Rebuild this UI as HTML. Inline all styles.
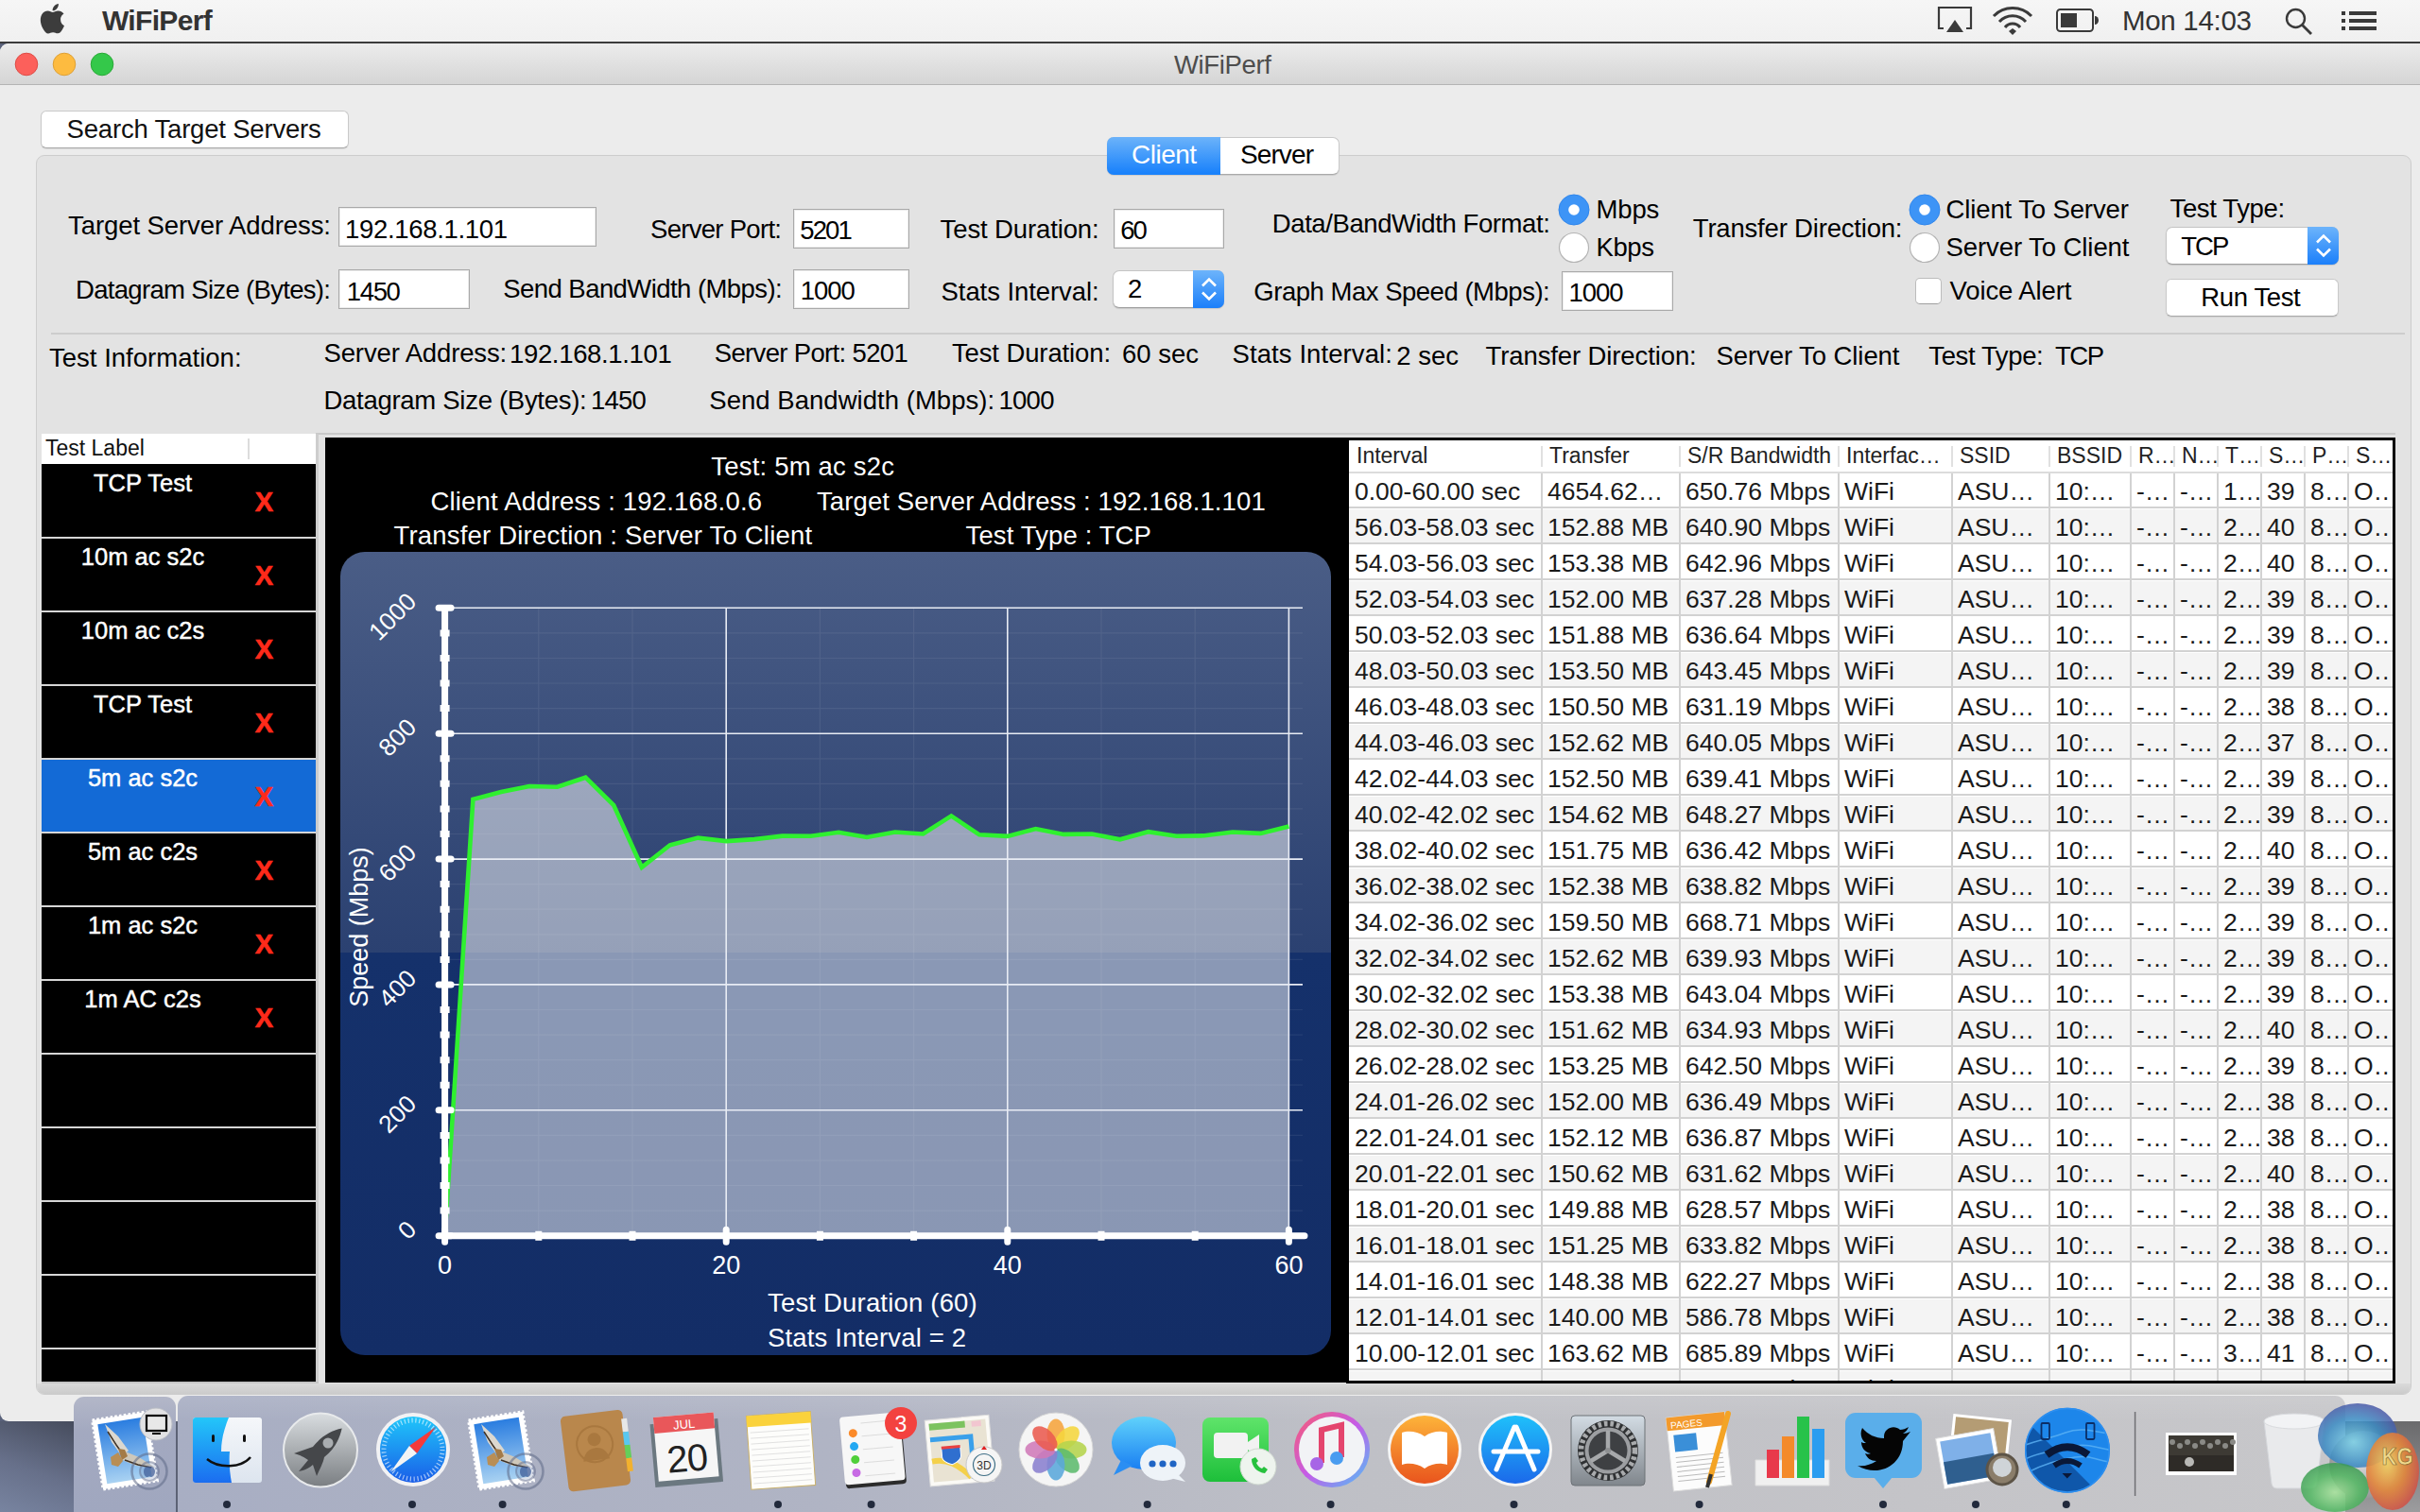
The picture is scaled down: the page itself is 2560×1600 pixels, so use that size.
<!DOCTYPE html><html><head><meta charset="utf-8"><title>WiFiPerf</title><style>
html,body{margin:0;padding:0;}
body{width:2560px;height:1600px;overflow:hidden;position:relative;font-family:"Liberation Sans", sans-serif;
background:linear-gradient(90deg,#59617a 0%,#6a6f80 40%,#7a7a80 100%);}
.t{position:absolute;white-space:pre;}
.r{position:absolute;box-sizing:border-box;}
svg{position:absolute;}

</style></head><body>
<div class="r" style="left:0px;top:0px;width:2560px;height:44px;background:linear-gradient(#f6f6f6,#f0f0f0);"></div>
<div class="r" style="left:0px;top:44px;width:2560px;height:2px;background:#3b3b3b;"></div>
<svg style="left:40px;top:3px" width="32" height="36" viewBox="0 0 34.8 39.2">
<path fill="#3c3c3c" d="M26.2 19.1c0-4.3 3.5-6.3 3.7-6.5-2-2.9-5.1-3.3-6.2-3.4-2.6-.3-5.2 1.6-6.5 1.6-1.4 0-3.4-1.5-5.6-1.5-2.9 0-5.6 1.7-7.1 4.3-3 5.3-.8 13.1 2.2 17.3 1.4 2.1 3.1 4.5 5.3 4.4 2.1-.1 2.9-1.4 5.5-1.4s3.300 1.4 5.500 1.3c2.300 0 3.700-2.100 5.100-4.200 1.600-2.400 2.300-4.700 2.300-4.800-.1 0-4.200-1.600-4.200-7.100zM22 6.500c1.200-1.400 2-3.400 1.800-5.400-1.700.1-3.800 1.100-5 2.600-1.100 1.300-2.100 3.300-1.800 5.300 1.900.1 3.800-1 5-2.500z"/></svg>
<div class="t" style="left:108.0px;top:6.6px;font-size:30px;line-height:30px;color:#333;letter-spacing:-0.679px;font-weight:bold;">WiFiPerf</div>
<svg style="left:2048px;top:6px" width="40" height="32" viewBox="0 0 40 32">
<path d="M8 24H3V2h34v22h-5" fill="none" stroke="#3a3a3a" stroke-width="2.2"/>
<path d="M20 15l-9 13h18z" fill="#3a3a3a"/></svg>
<svg style="left:2106px;top:6px" width="46" height="32" viewBox="0 0 46 32">
<path d="M3 11 A28 28 0 0 1 43 11" fill="none" stroke="#3a3a3a" stroke-width="3"/>
<path d="M9 17 A19 19 0 0 1 37 17" fill="none" stroke="#3a3a3a" stroke-width="3"/>
<path d="M15 23 A10 10 0 0 1 31 23" fill="none" stroke="#3a3a3a" stroke-width="3"/>
<path d="M19 27l4 4 4-4-4-3z" fill="#3a3a3a"/></svg>
<svg style="left:2174px;top:8px" width="50" height="28" viewBox="0 0 50 28">
<rect x="2" y="2" width="38" height="23" rx="3.5" fill="none" stroke="#3a3a3a" stroke-width="2"/>
<rect x="6" y="6" width="17" height="15" fill="#3a3a3a"/>
<path d="M42 9a4 4.5 0 0 1 0 9z" fill="#3a3a3a"/></svg>
<div class="t" style="left:2245.0px;top:7.0px;font-size:29.5px;line-height:29.5px;color:#333;letter-spacing:-0.312px;">Mon 14:03</div>
<svg style="left:2416px;top:7px" width="32" height="32" viewBox="0 0 32 32">
<circle cx="12.5" cy="12.5" r="9.5" fill="none" stroke="#3a3a3a" stroke-width="2.4"/>
<path d="M19.5 19.5L29 29" stroke="#3a3a3a" stroke-width="2.8"/></svg>
<svg style="left:2476px;top:10px" width="40" height="24" viewBox="0 0 40 24">
<rect x="1" y="2" width="4" height="4" fill="#3a3a3a"/><rect x="9" y="2" width="29" height="4" fill="#3a3a3a"/>
<rect x="1" y="10" width="4" height="4" fill="#3a3a3a"/><rect x="9" y="10" width="29" height="4" fill="#3a3a3a"/>
<rect x="1" y="18" width="4" height="4" fill="#3a3a3a"/><rect x="9" y="18" width="29" height="4" fill="#3a3a3a"/></svg>
<div class="r" style="left:0px;top:46px;width:2560px;height:1458px;background:#ececec;border-radius:9px 0 0 9px;"></div>
<div class="r" style="left:0px;top:46px;width:2560px;height:44px;background:linear-gradient(#ececec,#d5d5d5);border-radius:9px 0 0 0;border-bottom:1px solid #b4b4b4;"></div>
<svg style="left:15px;top:55px" width="26" height="26"><circle cx="13" cy="13" r="11.8" fill="#fc605b" stroke="#de4a44" stroke-width="1"/></svg>
<svg style="left:55px;top:55px" width="26" height="26"><circle cx="13" cy="13" r="11.8" fill="#fdbb40" stroke="#dea034" stroke-width="1"/></svg>
<svg style="left:95px;top:55px" width="26" height="26"><circle cx="13" cy="13" r="11.8" fill="#34c84a" stroke="#27aa35" stroke-width="1"/></svg>
<div class="t" style="left:1242.0px;top:54.7px;font-size:27.5px;line-height:27.5px;color:#4d4d4d;letter-spacing:-0.357px;">WiFiPerf</div>
<div class="r" style="left:43px;top:117px;width:326px;height:40px;background:#fff;border:1px solid #c9c9c9;border-bottom-color:#a8a8a8;border-radius:6px;box-shadow:0 1px 1px rgba(0,0,0,.08);"></div>
<div class="t" style="left:70.6px;top:122.7px;font-size:27.5px;line-height:27.5px;color:#111;letter-spacing:-0.195px;">Search Target Servers</div>
<div class="r" style="left:38px;top:164px;width:2513px;height:1312px;background:#e3e3e3;border:1px solid #cdcdcd;border-radius:9px;"></div>
<div class="r" style="left:1171px;top:145px;width:246px;height:40px;background:#fff;border:1px solid #c9c9c9;border-bottom-color:#a9a9a9;border-radius:7px;box-shadow:0 1px 1px rgba(0,0,0,.1);"></div>
<div class="r" style="left:1171px;top:145px;width:120px;height:40px;background:linear-gradient(#6cb3fa,#1a82fb 95%);border-radius:7px 0 0 7px;"></div>
<div class="t" style="left:1197.0px;top:150.3px;font-size:28px;line-height:28px;color:#fff;letter-spacing:-0.500px;">Client</div>
<div class="t" style="left:1312.0px;top:150.3px;font-size:28px;line-height:28px;color:#000;letter-spacing:-0.900px;">Server</div>
<div class="t" style="left:72.0px;top:224.7px;font-size:27.5px;line-height:27.5px;color:#000;letter-spacing:-0.083px;">Target Server Address:</div>
<div class="r" style="left:358px;top:219px;width:273px;height:42px;background:#fff;border:1px solid #a9a9a9;box-shadow:inset 0 0 0 1px #ececec;"></div>
<div class="t" style="left:365.0px;top:228.7px;font-size:27.5px;line-height:27.5px;color:#000;letter-spacing:-0.312px;">192.168.1.101</div>
<div class="t" style="left:688.0px;top:228.7px;font-size:27.5px;line-height:27.5px;color:#000;letter-spacing:-0.705px;">Server Port:</div>
<div class="r" style="left:839px;top:221px;width:123px;height:42px;background:#fff;border:1px solid #a9a9a9;box-shadow:inset 0 0 0 1px #ececec;"></div>
<div class="t" style="left:846.3px;top:230.2px;font-size:27.5px;line-height:27.5px;color:#000;letter-spacing:-1.917px;">5201</div>
<div class="t" style="left:994.6px;top:228.7px;font-size:27.5px;line-height:27.5px;color:#000;letter-spacing:-0.127px;">Test Duration:</div>
<div class="r" style="left:1178px;top:221px;width:117px;height:42px;background:#fff;border:1px solid #a9a9a9;box-shadow:inset 0 0 0 1px #ececec;"></div>
<div class="t" style="left:1185.3px;top:230.3px;font-size:27.5px;line-height:27.5px;color:#000;letter-spacing:-2.200px;">60</div>
<div class="t" style="left:1345.8px;top:222.9px;font-size:27.5px;line-height:27.5px;color:#000;letter-spacing:-0.410px;">Data/BandWidth Format:</div>
<svg style="left:1648px;top:205px" width="34" height="34"><circle cx="17" cy="17" r="16" fill="#3d94f6" stroke="#2f86ec" stroke-width="1"/><circle cx="17" cy="17" r="5.8" fill="#fff"/></svg>
<div class="t" style="left:1688.5px;top:208.0px;font-size:27.5px;line-height:27.5px;color:#000;letter-spacing:-0.150px;">Mbps</div>
<svg style="left:1648px;top:245px" width="34" height="34"><circle cx="17" cy="17" r="15.5" fill="#fff" stroke="#b4b4b4" stroke-width="1.2"/></svg>
<div class="t" style="left:1688.5px;top:248.1px;font-size:27.5px;line-height:27.5px;color:#000;letter-spacing:-0.417px;">Kbps</div>
<div class="t" style="left:1790.8px;top:228.1px;font-size:27.5px;line-height:27.5px;color:#000;letter-spacing:-0.192px;">Transfer Direction:</div>
<svg style="left:2019px;top:205px" width="34" height="34"><circle cx="17" cy="17" r="16" fill="#3d94f6" stroke="#2f86ec" stroke-width="1"/><circle cx="17" cy="17" r="5.8" fill="#fff"/></svg>
<div class="t" style="left:2058.5px;top:208.1px;font-size:27.5px;line-height:27.5px;color:#000;letter-spacing:-0.117px;">Client To Server</div>
<svg style="left:2019px;top:245px" width="34" height="34"><circle cx="17" cy="17" r="15.5" fill="#fff" stroke="#b4b4b4" stroke-width="1.2"/></svg>
<div class="t" style="left:2058.5px;top:248.1px;font-size:27.5px;line-height:27.5px;color:#000;letter-spacing:-0.077px;">Server To Client</div>
<div class="t" style="left:2295.5px;top:206.7px;font-size:27.5px;line-height:27.5px;color:#000;letter-spacing:-0.361px;">Test Type:</div>
<div class="r" style="left:2291px;top:240px;width:183px;height:40px;background:#fff;border:1px solid #c4c4c4;border-bottom-color:#9f9f9f;border-radius:7px;box-shadow:0 1px 1px rgba(0,0,0,.12);"></div>
<div class="r" style="left:2441px;top:240px;width:33px;height:40px;background:linear-gradient(#6db4fb,#1b7ffa);border-radius:0 7px 7px 0;"></div>
<svg style="left:2447.5px;top:246.0px" width="20" height="28" viewBox="0 0 20 28"><path d="M3 10.5L10 3.5 17 10.5M3 17.5L10 24.5 17 17.5" fill="none" stroke="#fff" stroke-width="2.6"/></svg>
<div class="t" style="left:2307.2px;top:246.7px;font-size:27.5px;line-height:27.5px;color:#000;letter-spacing:-1.900px;">TCP</div>
<div class="t" style="left:80.0px;top:293.3px;font-size:27.5px;line-height:27.5px;color:#000;letter-spacing:-0.679px;">Datagram Size (Bytes):</div>
<div class="r" style="left:358px;top:285px;width:139px;height:42px;background:#fff;border:1px solid #a9a9a9;box-shadow:inset 0 0 0 1px #ececec;"></div>
<div class="t" style="left:366.7px;top:294.7px;font-size:27.5px;line-height:27.5px;color:#000;letter-spacing:-1.317px;">1450</div>
<div class="t" style="left:532.3px;top:292.3px;font-size:27.5px;line-height:27.5px;color:#000;letter-spacing:-0.560px;">Send BandWidth (Mbps):</div>
<div class="r" style="left:839px;top:285px;width:123px;height:42px;background:#fff;border:1px solid #a9a9a9;box-shadow:inset 0 0 0 1px #ececec;"></div>
<div class="t" style="left:846.8px;top:294.1px;font-size:27.5px;line-height:27.5px;color:#000;letter-spacing:-1.083px;">1000</div>
<div class="t" style="left:995.6px;top:294.7px;font-size:27.5px;line-height:27.5px;color:#000;letter-spacing:-0.082px;">Stats Interval:</div>
<div class="r" style="left:1177px;top:286px;width:118px;height:40px;background:#fff;border:1px solid #c4c4c4;border-bottom-color:#9f9f9f;border-radius:7px;box-shadow:0 1px 1px rgba(0,0,0,.12);"></div>
<div class="r" style="left:1262px;top:286px;width:33px;height:40px;background:linear-gradient(#6db4fb,#1b7ffa);border-radius:0 7px 7px 0;"></div>
<svg style="left:1268.5px;top:292.0px" width="20" height="28" viewBox="0 0 20 28"><path d="M3 10.5L10 3.5 17 10.5M3 17.5L10 24.5 17 17.5" fill="none" stroke="#fff" stroke-width="2.6"/></svg>
<div class="t" style="left:1193.0px;top:292.4px;font-size:27.5px;line-height:27.5px;color:#000;letter-spacing:0.000px;">2</div>
<div class="t" style="left:1326.3px;top:294.7px;font-size:27.5px;line-height:27.5px;color:#000;letter-spacing:-0.482px;">Graph Max Speed (Mbps):</div>
<div class="r" style="left:1652px;top:287px;width:118px;height:42px;background:#fff;border:1px solid #a9a9a9;box-shadow:inset 0 0 0 1px #ececec;"></div>
<div class="t" style="left:1659.5px;top:296.3px;font-size:27.5px;line-height:27.5px;color:#000;letter-spacing:-1.050px;">1000</div>
<div class="r" style="left:2026px;top:294px;width:28px;height:28px;background:#fff;border:1px solid #bcbcbc;border-bottom-color:#a0a0a0;border-radius:5px;"></div>
<div class="t" style="left:2062.5px;top:294.1px;font-size:27.5px;line-height:27.5px;color:#000;letter-spacing:-0.110px;">Voice Alert</div>
<div class="r" style="left:2291px;top:295px;width:183px;height:40px;background:#fff;border:1px solid #c9c9c9;border-bottom-color:#a8a8a8;border-radius:6px;box-shadow:0 1px 1px rgba(0,0,0,.08);"></div>
<div class="t" style="left:2328.3px;top:300.6px;font-size:27.5px;line-height:27.5px;color:#000;letter-spacing:-0.371px;">Run Test</div>
<div class="r" style="left:54px;top:352px;width:2490px;height:2px;background:#cdcdcd;"></div>
<div class="t" style="left:52.0px;top:365.0px;font-size:27.5px;line-height:27.5px;color:#000;letter-spacing:0.016px;">Test Information:</div>
<div class="t" style="left:342.5px;top:360.4px;font-size:27.5px;line-height:27.5px;color:#000;letter-spacing:-0.139px;">Server Address:</div>
<div class="t" style="left:539.0px;top:360.8px;font-size:27.5px;line-height:27.5px;color:#000;letter-spacing:-0.337px;">192.168.1.101</div>
<div class="t" style="left:755.8px;top:360.4px;font-size:27.5px;line-height:27.5px;color:#000;letter-spacing:-0.662px;">Server Port: 5201</div>
<div class="t" style="left:1006.9px;top:360.4px;font-size:27.5px;line-height:27.5px;color:#000;letter-spacing:-0.112px;">Test Duration:</div>
<div class="t" style="left:1187.0px;top:360.8px;font-size:27.5px;line-height:27.5px;color:#000;letter-spacing:0.000px;">60 sec</div>
<div class="t" style="left:1303.6px;top:360.8px;font-size:27.5px;line-height:27.5px;color:#000;letter-spacing:0.082px;">Stats Interval:</div>
<div class="t" style="left:1477.2px;top:362.9px;font-size:27.5px;line-height:27.5px;color:#000;letter-spacing:0.037px;">2 sec</div>
<div class="t" style="left:1571.6px;top:362.7px;font-size:27.5px;line-height:27.5px;color:#000;letter-spacing:-0.114px;">Transfer Direction:</div>
<div class="t" style="left:1815.5px;top:362.7px;font-size:27.5px;line-height:27.5px;color:#000;letter-spacing:-0.077px;">Server To Client</div>
<div class="t" style="left:2040.3px;top:362.7px;font-size:27.5px;line-height:27.5px;color:#000;letter-spacing:-0.383px;">Test Type:</div>
<div class="t" style="left:2173.9px;top:362.7px;font-size:27.5px;line-height:27.5px;color:#000;letter-spacing:-1.450px;">TCP</div>
<div class="t" style="left:342.5px;top:410.3px;font-size:27.5px;line-height:27.5px;color:#000;letter-spacing:-0.288px;">Datagram Size (Bytes):</div>
<div class="t" style="left:624.9px;top:410.3px;font-size:27.5px;line-height:27.5px;color:#000;letter-spacing:-0.783px;">1450</div>
<div class="t" style="left:750.3px;top:410.3px;font-size:27.5px;line-height:27.5px;color:#000;letter-spacing:0.033px;">Send Bandwidth (Mbps):</div>
<div class="t" style="left:1056.5px;top:410.3px;font-size:27.5px;line-height:27.5px;color:#000;letter-spacing:-0.750px;">1000</div>
<div class="r" style="left:44px;top:459px;width:290px;height:32px;background:#fff;"></div>
<div class="r" style="left:334px;top:458px;width:2200px;height:2px;background:#c9c9c9;"></div>
<div class="t" style="left:48.0px;top:462.5px;font-size:23px;line-height:23px;color:#111;">Test Label</div>
<div class="r" style="left:262px;top:464px;width:2px;height:22px;background:#dcdcdc;"></div>
<div class="r" style="left:334px;top:459px;width:3px;height:1005px;background:#cdcdcd;"></div>
<div class="r" style="left:44px;top:1462px;width:293px;height:2px;background:#c6c6c6;"></div>
<div class="r" style="left:39px;top:1464px;width:2511px;height:11px;background:linear-gradient(#dadada,#cbcbcb);border-radius:0 0 8px 8px;"></div>
<div class="r" style="left:44px;top:491px;width:290px;height:971px;background:#000;"></div>
<div class="t" style="left:41.0px;width:220px;text-align:center;top:498.9px;font-size:25.5px;line-height:25.5px;color:#fff;-webkit-text-stroke:0.45px #fff;">TCP Test</div>
<div class="t" style="left:259.5px;width:40px;text-align:center;top:517.4px;font-size:29px;line-height:29px;color:#ff2a1a;font-weight:bold;-webkit-text-stroke:0.6px #ff2a1a;">X</div>
<div class="r" style="left:44px;top:568px;width:290px;height:2px;background:#d6d6d6;"></div>
<div class="t" style="left:41.0px;width:220px;text-align:center;top:576.9px;font-size:25.5px;line-height:25.5px;color:#fff;-webkit-text-stroke:0.45px #fff;">10m ac s2c</div>
<div class="t" style="left:259.5px;width:40px;text-align:center;top:595.4px;font-size:29px;line-height:29px;color:#ff2a1a;font-weight:bold;-webkit-text-stroke:0.6px #ff2a1a;">X</div>
<div class="r" style="left:44px;top:646px;width:290px;height:2px;background:#d6d6d6;"></div>
<div class="t" style="left:41.0px;width:220px;text-align:center;top:654.9px;font-size:25.5px;line-height:25.5px;color:#fff;-webkit-text-stroke:0.45px #fff;">10m ac c2s</div>
<div class="t" style="left:259.5px;width:40px;text-align:center;top:673.4px;font-size:29px;line-height:29px;color:#ff2a1a;font-weight:bold;-webkit-text-stroke:0.6px #ff2a1a;">X</div>
<div class="r" style="left:44px;top:724px;width:290px;height:2px;background:#d6d6d6;"></div>
<div class="t" style="left:41.0px;width:220px;text-align:center;top:732.9px;font-size:25.5px;line-height:25.5px;color:#fff;-webkit-text-stroke:0.45px #fff;">TCP Test</div>
<div class="t" style="left:259.5px;width:40px;text-align:center;top:751.4px;font-size:29px;line-height:29px;color:#ff2a1a;font-weight:bold;-webkit-text-stroke:0.6px #ff2a1a;">X</div>
<div class="r" style="left:44px;top:802px;width:290px;height:2px;background:#d6d6d6;"></div>
<div class="r" style="left:44px;top:804px;width:290px;height:76px;background:#136ad6;"></div>
<div class="t" style="left:41.0px;width:220px;text-align:center;top:810.9px;font-size:25.5px;line-height:25.5px;color:#fff;-webkit-text-stroke:0.45px #fff;">5m ac s2c</div>
<div class="t" style="left:259.5px;width:40px;text-align:center;top:829.4px;font-size:29px;line-height:29px;color:#ff2a1a;font-weight:bold;-webkit-text-stroke:0.6px #ff2a1a;">X</div>
<div class="r" style="left:44px;top:880px;width:290px;height:2px;background:#d6d6d6;"></div>
<div class="t" style="left:41.0px;width:220px;text-align:center;top:888.9px;font-size:25.5px;line-height:25.5px;color:#fff;-webkit-text-stroke:0.45px #fff;">5m ac c2s</div>
<div class="t" style="left:259.5px;width:40px;text-align:center;top:907.4px;font-size:29px;line-height:29px;color:#ff2a1a;font-weight:bold;-webkit-text-stroke:0.6px #ff2a1a;">X</div>
<div class="r" style="left:44px;top:958px;width:290px;height:2px;background:#d6d6d6;"></div>
<div class="t" style="left:41.0px;width:220px;text-align:center;top:966.9px;font-size:25.5px;line-height:25.5px;color:#fff;-webkit-text-stroke:0.45px #fff;">1m ac s2c</div>
<div class="t" style="left:259.5px;width:40px;text-align:center;top:985.4px;font-size:29px;line-height:29px;color:#ff2a1a;font-weight:bold;-webkit-text-stroke:0.6px #ff2a1a;">X</div>
<div class="r" style="left:44px;top:1036px;width:290px;height:2px;background:#d6d6d6;"></div>
<div class="t" style="left:41.0px;width:220px;text-align:center;top:1044.9px;font-size:25.5px;line-height:25.5px;color:#fff;-webkit-text-stroke:0.45px #fff;">1m AC c2s</div>
<div class="t" style="left:259.5px;width:40px;text-align:center;top:1063.4px;font-size:29px;line-height:29px;color:#ff2a1a;font-weight:bold;-webkit-text-stroke:0.6px #ff2a1a;">X</div>
<div class="r" style="left:44px;top:1114px;width:290px;height:2px;background:#d6d6d6;"></div>
<div class="r" style="left:44px;top:1192px;width:290px;height:2px;background:#d6d6d6;"></div>
<div class="r" style="left:44px;top:1270px;width:290px;height:2px;background:#d6d6d6;"></div>
<div class="r" style="left:44px;top:1348px;width:290px;height:2px;background:#d6d6d6;"></div>
<div class="r" style="left:44px;top:1426px;width:290px;height:2px;background:#d6d6d6;"></div>
<div class="r" style="left:344px;top:463px;width:1080px;height:1000px;background:#000;"></div>
<svg style="left:0;top:0" width="1440" height="1470" viewBox="0 0 1440 1470">
<defs>
<linearGradient id="cg" x1="0" y1="0" x2="0" y2="1">
<stop offset="0" stop-color="#4a5d86"/><stop offset="1" stop-color="#2b4171"/></linearGradient>
<linearGradient id="cg2" x1="0" y1="0" x2="0" y2="1">
<stop offset="0" stop-color="#15316b"/><stop offset="1" stop-color="#132d66"/></linearGradient>
<clipPath id="cr"><rect x="360" y="584" width="1048" height="850" rx="26" ry="26"/></clipPath>
</defs>
<g clip-path="url(#cr)">
<rect x="360" y="584" width="1048" height="424" fill="url(#cg)"/>
<rect x="360" y="1008" width="1048" height="426" fill="url(#cg2)"/>
</g>
<path d="M470.6 1281.1H1378 M470.6 1254.5H1378 M470.6 1228.0H1378 M470.6 1201.4H1378 M470.6 1148.2H1378 M470.6 1121.7H1378 M470.6 1095.1H1378 M470.6 1068.5H1378 M470.6 1015.4H1378 M470.6 988.8H1378 M470.6 962.2H1378 M470.6 935.6H1378 M470.6 882.5H1378 M470.6 855.9H1378 M470.6 829.3H1378 M470.6 802.8H1378 M470.6 749.6H1378 M470.6 723.0H1378 M470.6 696.5H1378 M470.6 669.9H1378 M569.8 643.3V1307.7 M669.0 643.3V1307.7 M867.4 643.3V1307.7 M966.6 643.3V1307.7 M1165.0 643.3V1307.7 M1264.2 643.3V1307.7" stroke="rgba(255,255,255,0.07)" stroke-width="1.2" fill="none"/>
<polygon points="470.6,1307.7 470.6,1307.7 500.4,845.9 530.1,838.0 559.9,832.0 589.6,832.7 619.4,822.7 649.2,852.0 678.9,917.8 708.7,894.3 738.4,886.6 768.2,890.1 798.0,888.1 827.7,884.6 857.5,884.8 887.2,880.8 917.0,885.9 946.8,880.5 976.5,882.5 1006.3,863.4 1036.0,883.3 1065.8,884.9 1095.6,877.0 1125.3,882.9 1155.1,882.5 1184.8,888.3 1214.6,880.2 1244.4,884.7 1274.1,884.3 1303.9,880.5 1333.6,881.9 1363.4,874.5 1363.4,1307.7" fill="rgba(255,255,255,0.5)"/>
<path d="M470.6 1174.8H1378 M470.6 1041.9H1378 M470.6 909.1H1378 M470.6 776.2H1378 M470.6 643.3H1378 M768.2 643.3V1307.7 M1065.8 643.3V1307.7 M1363.4 643.3V1307.7" stroke="#e8ecf4" stroke-width="1.6" fill="none"/>
<polyline points="470.6,1307.7 500.4,845.9 530.1,838.0 559.9,832.0 589.6,832.7 619.4,822.7 649.2,852.0 678.9,917.8 708.7,894.3 738.4,886.6 768.2,890.1 798.0,888.1 827.7,884.6 857.5,884.8 887.2,880.8 917.0,885.9 946.8,880.5 976.5,882.5 1006.3,863.4 1036.0,883.3 1065.8,884.9 1095.6,877.0 1125.3,882.9 1155.1,882.5 1184.8,888.3 1214.6,880.2 1244.4,884.7 1274.1,884.3 1303.9,880.5 1333.6,881.9 1363.4,874.5" fill="none" stroke="#2ff02f" stroke-width="4.6" stroke-linejoin="miter"/>
<path d="M470.6 644.3V1307.7H1380" stroke="#fff" stroke-width="7" stroke-linecap="round" fill="none"/>
<path d="M464.1 1307.7H477.1 M464.1 1174.8H477.1 M464.1 1041.9H477.1 M464.1 909.1H477.1 M464.1 776.2H477.1 M464.1 643.3H477.1 M470.6 1301.2V1314.2 M768.2 1301.2V1314.2 M1065.8 1301.2V1314.2 M1363.4 1301.2V1314.2" stroke="#fff" stroke-width="7" stroke-linecap="round" fill="none"/>
<path d="M465.6 1281.1H475.6 M465.6 1254.5H475.6 M465.6 1228.0H475.6 M465.6 1201.4H475.6 M465.6 1148.2H475.6 M465.6 1121.7H475.6 M465.6 1095.1H475.6 M465.6 1068.5H475.6 M465.6 1015.4H475.6 M465.6 988.8H475.6 M465.6 962.2H475.6 M465.6 935.6H475.6 M465.6 882.5H475.6 M465.6 855.9H475.6 M465.6 829.3H475.6 M465.6 802.8H475.6 M465.6 749.6H475.6 M465.6 723.0H475.6 M465.6 696.5H475.6 M465.6 669.9H475.6 M569.8 1302.7V1312.7 M669.0 1302.7V1312.7 M867.4 1302.7V1312.7 M966.6 1302.7V1312.7 M1165.0 1302.7V1312.7 M1264.2 1302.7V1312.7" stroke="#fff" stroke-width="7" stroke-linecap="butt" fill="none"/>
<text font-family="Liberation Sans, sans-serif" font-size="26" fill="#fff" text-anchor="end" transform="translate(442 1302.7) rotate(-45)">0</text>
<text font-family="Liberation Sans, sans-serif" font-size="26" fill="#fff" text-anchor="end" transform="translate(442 1169.8) rotate(-45)">200</text>
<text font-family="Liberation Sans, sans-serif" font-size="26" fill="#fff" text-anchor="end" transform="translate(442 1036.9) rotate(-45)">400</text>
<text font-family="Liberation Sans, sans-serif" font-size="26" fill="#fff" text-anchor="end" transform="translate(442 904.1) rotate(-45)">600</text>
<text font-family="Liberation Sans, sans-serif" font-size="26" fill="#fff" text-anchor="end" transform="translate(442 771.2) rotate(-45)">800</text>
<text font-family="Liberation Sans, sans-serif" font-size="26" fill="#fff" text-anchor="end" transform="translate(442 638.3) rotate(-45)">1000</text>
<text font-family="Liberation Sans, sans-serif" font-size="27" fill="#fff" text-anchor="middle" x="470.6" y="1348">0</text>
<text font-family="Liberation Sans, sans-serif" font-size="27" fill="#fff" text-anchor="middle" x="768.2" y="1348">20</text>
<text font-family="Liberation Sans, sans-serif" font-size="27" fill="#fff" text-anchor="middle" x="1065.8" y="1348">40</text>
<text font-family="Liberation Sans, sans-serif" font-size="27" fill="#fff" text-anchor="middle" x="1363.4" y="1348">60</text>
<text font-family="Liberation Sans, sans-serif" font-size="27" fill="#fff" text-anchor="middle" transform="translate(389 981) rotate(-90)">Speed (Mbps)</text>
</svg>
<div class="t" style="left:752.3px;top:480.4px;font-size:27.5px;line-height:27.5px;color:#fff;letter-spacing:0.193px;">Test: 5m ac s2c</div>
<div class="t" style="left:455.4px;top:516.5px;font-size:27.5px;line-height:27.5px;color:#fff;letter-spacing:0.189px;">Client Address : 192.168.0.6</div>
<div class="t" style="left:864.0px;top:516.5px;font-size:27.5px;line-height:27.5px;color:#fff;letter-spacing:0.107px;">Target Server Address : 192.168.1.101</div>
<div class="t" style="left:416.5px;top:552.5px;font-size:27.5px;line-height:27.5px;color:#fff;letter-spacing:0.194px;">Transfer Direction : Server To Client</div>
<div class="t" style="left:1021.5px;top:552.5px;font-size:27.5px;line-height:27.5px;color:#fff;letter-spacing:0.129px;">Test Type : TCP</div>
<div class="t" style="left:812.0px;top:1365.4px;font-size:27.5px;line-height:27.5px;color:#fff;letter-spacing:0.188px;">Test Duration (60)</div>
<div class="t" style="left:812.0px;top:1401.5px;font-size:27.5px;line-height:27.5px;color:#fff;letter-spacing:0.176px;">Stats Interval = 2</div>
<div class="r" style="left:1424px;top:463px;width:1110px;height:1001px;background:#000;"></div>
<div class="r" style="left:1427px;top:466px;width:1104px;height:995px;background:#fff;"></div>
<div style="position:absolute;left:0;top:0;width:2560px;height:1600px;clip-path:inset(466px 29px 139px 1427px)">
<div class="r" style="left:1427px;top:499px;width:1104px;height:2px;background:#dcdcdc;"></div>
<div style="position:absolute;left:1428px;top:467px;width:202px;height:32px;overflow:hidden"><div class="t" style="left:7px;top:3.5px;font-size:23px;line-height:23px;color:#222">Interval</div></div>
<div style="position:absolute;left:1632px;top:467px;width:144px;height:32px;overflow:hidden"><div class="t" style="left:7px;top:3.5px;font-size:23px;line-height:23px;color:#222">Transfer</div></div>
<div class="r" style="left:1630px;top:472px;width:2px;height:22px;background:#e0e0e0;"></div>
<div style="position:absolute;left:1778px;top:467px;width:166px;height:32px;overflow:hidden"><div class="t" style="left:7px;top:3.5px;font-size:23px;line-height:23px;color:#222">S/R Bandwidth</div></div>
<div class="r" style="left:1776px;top:472px;width:2px;height:22px;background:#e0e0e0;"></div>
<div style="position:absolute;left:1946px;top:467px;width:118px;height:32px;overflow:hidden"><div class="t" style="left:7px;top:3.5px;font-size:23px;line-height:23px;color:#222">Interfac…</div></div>
<div class="r" style="left:1944px;top:472px;width:2px;height:22px;background:#e0e0e0;"></div>
<div style="position:absolute;left:2066px;top:467px;width:101px;height:32px;overflow:hidden"><div class="t" style="left:7px;top:3.5px;font-size:23px;line-height:23px;color:#222">SSID</div></div>
<div class="r" style="left:2064px;top:472px;width:2px;height:22px;background:#e0e0e0;"></div>
<div style="position:absolute;left:2169px;top:467px;width:84px;height:32px;overflow:hidden"><div class="t" style="left:7px;top:3.5px;font-size:23px;line-height:23px;color:#222">BSSID</div></div>
<div class="r" style="left:2167px;top:472px;width:2px;height:22px;background:#e0e0e0;"></div>
<div style="position:absolute;left:2255px;top:467px;width:44px;height:32px;overflow:hidden"><div class="t" style="left:7px;top:3.5px;font-size:23px;line-height:23px;color:#222">R…</div></div>
<div class="r" style="left:2253px;top:472px;width:2px;height:22px;background:#e0e0e0;"></div>
<div style="position:absolute;left:2301px;top:467px;width:44px;height:32px;overflow:hidden"><div class="t" style="left:7px;top:3.5px;font-size:23px;line-height:23px;color:#222">N…</div></div>
<div class="r" style="left:2299px;top:472px;width:2px;height:22px;background:#e0e0e0;"></div>
<div style="position:absolute;left:2347px;top:467px;width:44px;height:32px;overflow:hidden"><div class="t" style="left:7px;top:3.5px;font-size:23px;line-height:23px;color:#222">T…</div></div>
<div class="r" style="left:2345px;top:472px;width:2px;height:22px;background:#e0e0e0;"></div>
<div style="position:absolute;left:2393px;top:467px;width:44px;height:32px;overflow:hidden"><div class="t" style="left:7px;top:3.5px;font-size:23px;line-height:23px;color:#222">S…</div></div>
<div class="r" style="left:2391px;top:472px;width:2px;height:22px;background:#e0e0e0;"></div>
<div style="position:absolute;left:2439px;top:467px;width:44px;height:32px;overflow:hidden"><div class="t" style="left:7px;top:3.5px;font-size:23px;line-height:23px;color:#222">P…</div></div>
<div class="r" style="left:2437px;top:472px;width:2px;height:22px;background:#e0e0e0;"></div>
<div style="position:absolute;left:2485px;top:467px;width:45px;height:32px;overflow:hidden"><div class="t" style="left:7px;top:3.5px;font-size:23px;line-height:23px;color:#222">S…</div></div>
<div class="r" style="left:2483px;top:472px;width:2px;height:22px;background:#e0e0e0;"></div>
<div style="position:absolute;left:1428px;top:501px;width:202px;height:35px;overflow:hidden"><div class="t" style="left:5px;top:6.1px;font-size:26.5px;line-height:26.5px;color:#1a1a1a">0.00-60.00 sec</div></div>
<div style="position:absolute;left:1632px;top:501px;width:144px;height:35px;overflow:hidden"><div class="t" style="left:5px;top:6.1px;font-size:26.5px;line-height:26.5px;color:#1a1a1a">4654.62…</div></div>
<div style="position:absolute;left:1778px;top:501px;width:166px;height:35px;overflow:hidden"><div class="t" style="left:5px;top:6.1px;font-size:26.5px;line-height:26.5px;color:#1a1a1a">650.76 Mbps</div></div>
<div style="position:absolute;left:1946px;top:501px;width:118px;height:35px;overflow:hidden"><div class="t" style="left:5px;top:6.1px;font-size:26.5px;line-height:26.5px;color:#1a1a1a">WiFi</div></div>
<div style="position:absolute;left:2066px;top:501px;width:101px;height:35px;overflow:hidden"><div class="t" style="left:5px;top:6.1px;font-size:26.5px;line-height:26.5px;color:#1a1a1a">ASU…</div></div>
<div style="position:absolute;left:2169px;top:501px;width:84px;height:35px;overflow:hidden"><div class="t" style="left:5px;top:6.1px;font-size:26.5px;line-height:26.5px;color:#1a1a1a">10:…</div></div>
<div style="position:absolute;left:2255px;top:501px;width:44px;height:35px;overflow:hidden"><div class="t" style="left:5px;top:6.1px;font-size:26.5px;line-height:26.5px;color:#1a1a1a">-…</div></div>
<div style="position:absolute;left:2301px;top:501px;width:44px;height:35px;overflow:hidden"><div class="t" style="left:5px;top:6.1px;font-size:26.5px;line-height:26.5px;color:#1a1a1a">-…</div></div>
<div style="position:absolute;left:2347px;top:501px;width:44px;height:35px;overflow:hidden"><div class="t" style="left:5px;top:6.1px;font-size:26.5px;line-height:26.5px;color:#1a1a1a">1…</div></div>
<div style="position:absolute;left:2393px;top:501px;width:44px;height:35px;overflow:hidden"><div class="t" style="left:5px;top:6.1px;font-size:26.5px;line-height:26.5px;color:#1a1a1a">39</div></div>
<div style="position:absolute;left:2439px;top:501px;width:44px;height:35px;overflow:hidden"><div class="t" style="left:5px;top:6.1px;font-size:26.5px;line-height:26.5px;color:#1a1a1a">8…</div></div>
<div style="position:absolute;left:2485px;top:501px;width:45px;height:35px;overflow:hidden"><div class="t" style="left:5px;top:6.1px;font-size:26.5px;line-height:26.5px;color:#1a1a1a">O…</div></div>
<div class="r" style="left:1427px;top:536px;width:1104px;height:2px;background:#d2d2d2;"></div>
<div class="r" style="left:1427px;top:539px;width:1104px;height:36px;background:#f4f4f4;"></div>
<div style="position:absolute;left:1428px;top:539px;width:202px;height:35px;overflow:hidden"><div class="t" style="left:5px;top:6.1px;font-size:26.5px;line-height:26.5px;color:#1a1a1a">56.03-58.03 sec</div></div>
<div style="position:absolute;left:1632px;top:539px;width:144px;height:35px;overflow:hidden"><div class="t" style="left:5px;top:6.1px;font-size:26.5px;line-height:26.5px;color:#1a1a1a">152.88 MB</div></div>
<div style="position:absolute;left:1778px;top:539px;width:166px;height:35px;overflow:hidden"><div class="t" style="left:5px;top:6.1px;font-size:26.5px;line-height:26.5px;color:#1a1a1a">640.90 Mbps</div></div>
<div style="position:absolute;left:1946px;top:539px;width:118px;height:35px;overflow:hidden"><div class="t" style="left:5px;top:6.1px;font-size:26.5px;line-height:26.5px;color:#1a1a1a">WiFi</div></div>
<div style="position:absolute;left:2066px;top:539px;width:101px;height:35px;overflow:hidden"><div class="t" style="left:5px;top:6.1px;font-size:26.5px;line-height:26.5px;color:#1a1a1a">ASU…</div></div>
<div style="position:absolute;left:2169px;top:539px;width:84px;height:35px;overflow:hidden"><div class="t" style="left:5px;top:6.1px;font-size:26.5px;line-height:26.5px;color:#1a1a1a">10:…</div></div>
<div style="position:absolute;left:2255px;top:539px;width:44px;height:35px;overflow:hidden"><div class="t" style="left:5px;top:6.1px;font-size:26.5px;line-height:26.5px;color:#1a1a1a">-…</div></div>
<div style="position:absolute;left:2301px;top:539px;width:44px;height:35px;overflow:hidden"><div class="t" style="left:5px;top:6.1px;font-size:26.5px;line-height:26.5px;color:#1a1a1a">-…</div></div>
<div style="position:absolute;left:2347px;top:539px;width:44px;height:35px;overflow:hidden"><div class="t" style="left:5px;top:6.1px;font-size:26.5px;line-height:26.5px;color:#1a1a1a">2…</div></div>
<div style="position:absolute;left:2393px;top:539px;width:44px;height:35px;overflow:hidden"><div class="t" style="left:5px;top:6.1px;font-size:26.5px;line-height:26.5px;color:#1a1a1a">40</div></div>
<div style="position:absolute;left:2439px;top:539px;width:44px;height:35px;overflow:hidden"><div class="t" style="left:5px;top:6.1px;font-size:26.5px;line-height:26.5px;color:#1a1a1a">8…</div></div>
<div style="position:absolute;left:2485px;top:539px;width:45px;height:35px;overflow:hidden"><div class="t" style="left:5px;top:6.1px;font-size:26.5px;line-height:26.5px;color:#1a1a1a">O…</div></div>
<div class="r" style="left:1427px;top:574px;width:1104px;height:2px;background:#d2d2d2;"></div>
<div style="position:absolute;left:1428px;top:577px;width:202px;height:35px;overflow:hidden"><div class="t" style="left:5px;top:6.1px;font-size:26.5px;line-height:26.5px;color:#1a1a1a">54.03-56.03 sec</div></div>
<div style="position:absolute;left:1632px;top:577px;width:144px;height:35px;overflow:hidden"><div class="t" style="left:5px;top:6.1px;font-size:26.5px;line-height:26.5px;color:#1a1a1a">153.38 MB</div></div>
<div style="position:absolute;left:1778px;top:577px;width:166px;height:35px;overflow:hidden"><div class="t" style="left:5px;top:6.1px;font-size:26.5px;line-height:26.5px;color:#1a1a1a">642.96 Mbps</div></div>
<div style="position:absolute;left:1946px;top:577px;width:118px;height:35px;overflow:hidden"><div class="t" style="left:5px;top:6.1px;font-size:26.5px;line-height:26.5px;color:#1a1a1a">WiFi</div></div>
<div style="position:absolute;left:2066px;top:577px;width:101px;height:35px;overflow:hidden"><div class="t" style="left:5px;top:6.1px;font-size:26.5px;line-height:26.5px;color:#1a1a1a">ASU…</div></div>
<div style="position:absolute;left:2169px;top:577px;width:84px;height:35px;overflow:hidden"><div class="t" style="left:5px;top:6.1px;font-size:26.5px;line-height:26.5px;color:#1a1a1a">10:…</div></div>
<div style="position:absolute;left:2255px;top:577px;width:44px;height:35px;overflow:hidden"><div class="t" style="left:5px;top:6.1px;font-size:26.5px;line-height:26.5px;color:#1a1a1a">-…</div></div>
<div style="position:absolute;left:2301px;top:577px;width:44px;height:35px;overflow:hidden"><div class="t" style="left:5px;top:6.1px;font-size:26.5px;line-height:26.5px;color:#1a1a1a">-…</div></div>
<div style="position:absolute;left:2347px;top:577px;width:44px;height:35px;overflow:hidden"><div class="t" style="left:5px;top:6.1px;font-size:26.5px;line-height:26.5px;color:#1a1a1a">2…</div></div>
<div style="position:absolute;left:2393px;top:577px;width:44px;height:35px;overflow:hidden"><div class="t" style="left:5px;top:6.1px;font-size:26.5px;line-height:26.5px;color:#1a1a1a">40</div></div>
<div style="position:absolute;left:2439px;top:577px;width:44px;height:35px;overflow:hidden"><div class="t" style="left:5px;top:6.1px;font-size:26.5px;line-height:26.5px;color:#1a1a1a">8…</div></div>
<div style="position:absolute;left:2485px;top:577px;width:45px;height:35px;overflow:hidden"><div class="t" style="left:5px;top:6.1px;font-size:26.5px;line-height:26.5px;color:#1a1a1a">O…</div></div>
<div class="r" style="left:1427px;top:612px;width:1104px;height:2px;background:#d2d2d2;"></div>
<div class="r" style="left:1427px;top:615px;width:1104px;height:36px;background:#f4f4f4;"></div>
<div style="position:absolute;left:1428px;top:615px;width:202px;height:35px;overflow:hidden"><div class="t" style="left:5px;top:6.1px;font-size:26.5px;line-height:26.5px;color:#1a1a1a">52.03-54.03 sec</div></div>
<div style="position:absolute;left:1632px;top:615px;width:144px;height:35px;overflow:hidden"><div class="t" style="left:5px;top:6.1px;font-size:26.5px;line-height:26.5px;color:#1a1a1a">152.00 MB</div></div>
<div style="position:absolute;left:1778px;top:615px;width:166px;height:35px;overflow:hidden"><div class="t" style="left:5px;top:6.1px;font-size:26.5px;line-height:26.5px;color:#1a1a1a">637.28 Mbps</div></div>
<div style="position:absolute;left:1946px;top:615px;width:118px;height:35px;overflow:hidden"><div class="t" style="left:5px;top:6.1px;font-size:26.5px;line-height:26.5px;color:#1a1a1a">WiFi</div></div>
<div style="position:absolute;left:2066px;top:615px;width:101px;height:35px;overflow:hidden"><div class="t" style="left:5px;top:6.1px;font-size:26.5px;line-height:26.5px;color:#1a1a1a">ASU…</div></div>
<div style="position:absolute;left:2169px;top:615px;width:84px;height:35px;overflow:hidden"><div class="t" style="left:5px;top:6.1px;font-size:26.5px;line-height:26.5px;color:#1a1a1a">10:…</div></div>
<div style="position:absolute;left:2255px;top:615px;width:44px;height:35px;overflow:hidden"><div class="t" style="left:5px;top:6.1px;font-size:26.5px;line-height:26.5px;color:#1a1a1a">-…</div></div>
<div style="position:absolute;left:2301px;top:615px;width:44px;height:35px;overflow:hidden"><div class="t" style="left:5px;top:6.1px;font-size:26.5px;line-height:26.5px;color:#1a1a1a">-…</div></div>
<div style="position:absolute;left:2347px;top:615px;width:44px;height:35px;overflow:hidden"><div class="t" style="left:5px;top:6.1px;font-size:26.5px;line-height:26.5px;color:#1a1a1a">2…</div></div>
<div style="position:absolute;left:2393px;top:615px;width:44px;height:35px;overflow:hidden"><div class="t" style="left:5px;top:6.1px;font-size:26.5px;line-height:26.5px;color:#1a1a1a">39</div></div>
<div style="position:absolute;left:2439px;top:615px;width:44px;height:35px;overflow:hidden"><div class="t" style="left:5px;top:6.1px;font-size:26.5px;line-height:26.5px;color:#1a1a1a">8…</div></div>
<div style="position:absolute;left:2485px;top:615px;width:45px;height:35px;overflow:hidden"><div class="t" style="left:5px;top:6.1px;font-size:26.5px;line-height:26.5px;color:#1a1a1a">O…</div></div>
<div class="r" style="left:1427px;top:650px;width:1104px;height:2px;background:#d2d2d2;"></div>
<div style="position:absolute;left:1428px;top:653px;width:202px;height:35px;overflow:hidden"><div class="t" style="left:5px;top:6.1px;font-size:26.5px;line-height:26.5px;color:#1a1a1a">50.03-52.03 sec</div></div>
<div style="position:absolute;left:1632px;top:653px;width:144px;height:35px;overflow:hidden"><div class="t" style="left:5px;top:6.1px;font-size:26.5px;line-height:26.5px;color:#1a1a1a">151.88 MB</div></div>
<div style="position:absolute;left:1778px;top:653px;width:166px;height:35px;overflow:hidden"><div class="t" style="left:5px;top:6.1px;font-size:26.5px;line-height:26.5px;color:#1a1a1a">636.64 Mbps</div></div>
<div style="position:absolute;left:1946px;top:653px;width:118px;height:35px;overflow:hidden"><div class="t" style="left:5px;top:6.1px;font-size:26.5px;line-height:26.5px;color:#1a1a1a">WiFi</div></div>
<div style="position:absolute;left:2066px;top:653px;width:101px;height:35px;overflow:hidden"><div class="t" style="left:5px;top:6.1px;font-size:26.5px;line-height:26.5px;color:#1a1a1a">ASU…</div></div>
<div style="position:absolute;left:2169px;top:653px;width:84px;height:35px;overflow:hidden"><div class="t" style="left:5px;top:6.1px;font-size:26.5px;line-height:26.5px;color:#1a1a1a">10:…</div></div>
<div style="position:absolute;left:2255px;top:653px;width:44px;height:35px;overflow:hidden"><div class="t" style="left:5px;top:6.1px;font-size:26.5px;line-height:26.5px;color:#1a1a1a">-…</div></div>
<div style="position:absolute;left:2301px;top:653px;width:44px;height:35px;overflow:hidden"><div class="t" style="left:5px;top:6.1px;font-size:26.5px;line-height:26.5px;color:#1a1a1a">-…</div></div>
<div style="position:absolute;left:2347px;top:653px;width:44px;height:35px;overflow:hidden"><div class="t" style="left:5px;top:6.1px;font-size:26.5px;line-height:26.5px;color:#1a1a1a">2…</div></div>
<div style="position:absolute;left:2393px;top:653px;width:44px;height:35px;overflow:hidden"><div class="t" style="left:5px;top:6.1px;font-size:26.5px;line-height:26.5px;color:#1a1a1a">39</div></div>
<div style="position:absolute;left:2439px;top:653px;width:44px;height:35px;overflow:hidden"><div class="t" style="left:5px;top:6.1px;font-size:26.5px;line-height:26.5px;color:#1a1a1a">8…</div></div>
<div style="position:absolute;left:2485px;top:653px;width:45px;height:35px;overflow:hidden"><div class="t" style="left:5px;top:6.1px;font-size:26.5px;line-height:26.5px;color:#1a1a1a">O…</div></div>
<div class="r" style="left:1427px;top:688px;width:1104px;height:2px;background:#d2d2d2;"></div>
<div class="r" style="left:1427px;top:691px;width:1104px;height:36px;background:#f4f4f4;"></div>
<div style="position:absolute;left:1428px;top:691px;width:202px;height:35px;overflow:hidden"><div class="t" style="left:5px;top:6.1px;font-size:26.5px;line-height:26.5px;color:#1a1a1a">48.03-50.03 sec</div></div>
<div style="position:absolute;left:1632px;top:691px;width:144px;height:35px;overflow:hidden"><div class="t" style="left:5px;top:6.1px;font-size:26.5px;line-height:26.5px;color:#1a1a1a">153.50 MB</div></div>
<div style="position:absolute;left:1778px;top:691px;width:166px;height:35px;overflow:hidden"><div class="t" style="left:5px;top:6.1px;font-size:26.5px;line-height:26.5px;color:#1a1a1a">643.45 Mbps</div></div>
<div style="position:absolute;left:1946px;top:691px;width:118px;height:35px;overflow:hidden"><div class="t" style="left:5px;top:6.1px;font-size:26.5px;line-height:26.5px;color:#1a1a1a">WiFi</div></div>
<div style="position:absolute;left:2066px;top:691px;width:101px;height:35px;overflow:hidden"><div class="t" style="left:5px;top:6.1px;font-size:26.5px;line-height:26.5px;color:#1a1a1a">ASU…</div></div>
<div style="position:absolute;left:2169px;top:691px;width:84px;height:35px;overflow:hidden"><div class="t" style="left:5px;top:6.1px;font-size:26.5px;line-height:26.5px;color:#1a1a1a">10:…</div></div>
<div style="position:absolute;left:2255px;top:691px;width:44px;height:35px;overflow:hidden"><div class="t" style="left:5px;top:6.1px;font-size:26.5px;line-height:26.5px;color:#1a1a1a">-…</div></div>
<div style="position:absolute;left:2301px;top:691px;width:44px;height:35px;overflow:hidden"><div class="t" style="left:5px;top:6.1px;font-size:26.5px;line-height:26.5px;color:#1a1a1a">-…</div></div>
<div style="position:absolute;left:2347px;top:691px;width:44px;height:35px;overflow:hidden"><div class="t" style="left:5px;top:6.1px;font-size:26.5px;line-height:26.5px;color:#1a1a1a">2…</div></div>
<div style="position:absolute;left:2393px;top:691px;width:44px;height:35px;overflow:hidden"><div class="t" style="left:5px;top:6.1px;font-size:26.5px;line-height:26.5px;color:#1a1a1a">39</div></div>
<div style="position:absolute;left:2439px;top:691px;width:44px;height:35px;overflow:hidden"><div class="t" style="left:5px;top:6.1px;font-size:26.5px;line-height:26.5px;color:#1a1a1a">8…</div></div>
<div style="position:absolute;left:2485px;top:691px;width:45px;height:35px;overflow:hidden"><div class="t" style="left:5px;top:6.1px;font-size:26.5px;line-height:26.5px;color:#1a1a1a">O…</div></div>
<div class="r" style="left:1427px;top:726px;width:1104px;height:2px;background:#d2d2d2;"></div>
<div style="position:absolute;left:1428px;top:729px;width:202px;height:35px;overflow:hidden"><div class="t" style="left:5px;top:6.1px;font-size:26.5px;line-height:26.5px;color:#1a1a1a">46.03-48.03 sec</div></div>
<div style="position:absolute;left:1632px;top:729px;width:144px;height:35px;overflow:hidden"><div class="t" style="left:5px;top:6.1px;font-size:26.5px;line-height:26.5px;color:#1a1a1a">150.50 MB</div></div>
<div style="position:absolute;left:1778px;top:729px;width:166px;height:35px;overflow:hidden"><div class="t" style="left:5px;top:6.1px;font-size:26.5px;line-height:26.5px;color:#1a1a1a">631.19 Mbps</div></div>
<div style="position:absolute;left:1946px;top:729px;width:118px;height:35px;overflow:hidden"><div class="t" style="left:5px;top:6.1px;font-size:26.5px;line-height:26.5px;color:#1a1a1a">WiFi</div></div>
<div style="position:absolute;left:2066px;top:729px;width:101px;height:35px;overflow:hidden"><div class="t" style="left:5px;top:6.1px;font-size:26.5px;line-height:26.5px;color:#1a1a1a">ASU…</div></div>
<div style="position:absolute;left:2169px;top:729px;width:84px;height:35px;overflow:hidden"><div class="t" style="left:5px;top:6.1px;font-size:26.5px;line-height:26.5px;color:#1a1a1a">10:…</div></div>
<div style="position:absolute;left:2255px;top:729px;width:44px;height:35px;overflow:hidden"><div class="t" style="left:5px;top:6.1px;font-size:26.5px;line-height:26.5px;color:#1a1a1a">-…</div></div>
<div style="position:absolute;left:2301px;top:729px;width:44px;height:35px;overflow:hidden"><div class="t" style="left:5px;top:6.1px;font-size:26.5px;line-height:26.5px;color:#1a1a1a">-…</div></div>
<div style="position:absolute;left:2347px;top:729px;width:44px;height:35px;overflow:hidden"><div class="t" style="left:5px;top:6.1px;font-size:26.5px;line-height:26.5px;color:#1a1a1a">2…</div></div>
<div style="position:absolute;left:2393px;top:729px;width:44px;height:35px;overflow:hidden"><div class="t" style="left:5px;top:6.1px;font-size:26.5px;line-height:26.5px;color:#1a1a1a">38</div></div>
<div style="position:absolute;left:2439px;top:729px;width:44px;height:35px;overflow:hidden"><div class="t" style="left:5px;top:6.1px;font-size:26.5px;line-height:26.5px;color:#1a1a1a">8…</div></div>
<div style="position:absolute;left:2485px;top:729px;width:45px;height:35px;overflow:hidden"><div class="t" style="left:5px;top:6.1px;font-size:26.5px;line-height:26.5px;color:#1a1a1a">O…</div></div>
<div class="r" style="left:1427px;top:764px;width:1104px;height:2px;background:#d2d2d2;"></div>
<div class="r" style="left:1427px;top:767px;width:1104px;height:36px;background:#f4f4f4;"></div>
<div style="position:absolute;left:1428px;top:767px;width:202px;height:35px;overflow:hidden"><div class="t" style="left:5px;top:6.1px;font-size:26.5px;line-height:26.5px;color:#1a1a1a">44.03-46.03 sec</div></div>
<div style="position:absolute;left:1632px;top:767px;width:144px;height:35px;overflow:hidden"><div class="t" style="left:5px;top:6.1px;font-size:26.5px;line-height:26.5px;color:#1a1a1a">152.62 MB</div></div>
<div style="position:absolute;left:1778px;top:767px;width:166px;height:35px;overflow:hidden"><div class="t" style="left:5px;top:6.1px;font-size:26.5px;line-height:26.5px;color:#1a1a1a">640.05 Mbps</div></div>
<div style="position:absolute;left:1946px;top:767px;width:118px;height:35px;overflow:hidden"><div class="t" style="left:5px;top:6.1px;font-size:26.5px;line-height:26.5px;color:#1a1a1a">WiFi</div></div>
<div style="position:absolute;left:2066px;top:767px;width:101px;height:35px;overflow:hidden"><div class="t" style="left:5px;top:6.1px;font-size:26.5px;line-height:26.5px;color:#1a1a1a">ASU…</div></div>
<div style="position:absolute;left:2169px;top:767px;width:84px;height:35px;overflow:hidden"><div class="t" style="left:5px;top:6.1px;font-size:26.5px;line-height:26.5px;color:#1a1a1a">10:…</div></div>
<div style="position:absolute;left:2255px;top:767px;width:44px;height:35px;overflow:hidden"><div class="t" style="left:5px;top:6.1px;font-size:26.5px;line-height:26.5px;color:#1a1a1a">-…</div></div>
<div style="position:absolute;left:2301px;top:767px;width:44px;height:35px;overflow:hidden"><div class="t" style="left:5px;top:6.1px;font-size:26.5px;line-height:26.5px;color:#1a1a1a">-…</div></div>
<div style="position:absolute;left:2347px;top:767px;width:44px;height:35px;overflow:hidden"><div class="t" style="left:5px;top:6.1px;font-size:26.5px;line-height:26.5px;color:#1a1a1a">2…</div></div>
<div style="position:absolute;left:2393px;top:767px;width:44px;height:35px;overflow:hidden"><div class="t" style="left:5px;top:6.1px;font-size:26.5px;line-height:26.5px;color:#1a1a1a">37</div></div>
<div style="position:absolute;left:2439px;top:767px;width:44px;height:35px;overflow:hidden"><div class="t" style="left:5px;top:6.1px;font-size:26.5px;line-height:26.5px;color:#1a1a1a">8…</div></div>
<div style="position:absolute;left:2485px;top:767px;width:45px;height:35px;overflow:hidden"><div class="t" style="left:5px;top:6.1px;font-size:26.5px;line-height:26.5px;color:#1a1a1a">O…</div></div>
<div class="r" style="left:1427px;top:802px;width:1104px;height:2px;background:#d2d2d2;"></div>
<div style="position:absolute;left:1428px;top:805px;width:202px;height:35px;overflow:hidden"><div class="t" style="left:5px;top:6.1px;font-size:26.5px;line-height:26.5px;color:#1a1a1a">42.02-44.03 sec</div></div>
<div style="position:absolute;left:1632px;top:805px;width:144px;height:35px;overflow:hidden"><div class="t" style="left:5px;top:6.1px;font-size:26.5px;line-height:26.5px;color:#1a1a1a">152.50 MB</div></div>
<div style="position:absolute;left:1778px;top:805px;width:166px;height:35px;overflow:hidden"><div class="t" style="left:5px;top:6.1px;font-size:26.5px;line-height:26.5px;color:#1a1a1a">639.41 Mbps</div></div>
<div style="position:absolute;left:1946px;top:805px;width:118px;height:35px;overflow:hidden"><div class="t" style="left:5px;top:6.1px;font-size:26.5px;line-height:26.5px;color:#1a1a1a">WiFi</div></div>
<div style="position:absolute;left:2066px;top:805px;width:101px;height:35px;overflow:hidden"><div class="t" style="left:5px;top:6.1px;font-size:26.5px;line-height:26.5px;color:#1a1a1a">ASU…</div></div>
<div style="position:absolute;left:2169px;top:805px;width:84px;height:35px;overflow:hidden"><div class="t" style="left:5px;top:6.1px;font-size:26.5px;line-height:26.5px;color:#1a1a1a">10:…</div></div>
<div style="position:absolute;left:2255px;top:805px;width:44px;height:35px;overflow:hidden"><div class="t" style="left:5px;top:6.1px;font-size:26.5px;line-height:26.5px;color:#1a1a1a">-…</div></div>
<div style="position:absolute;left:2301px;top:805px;width:44px;height:35px;overflow:hidden"><div class="t" style="left:5px;top:6.1px;font-size:26.5px;line-height:26.5px;color:#1a1a1a">-…</div></div>
<div style="position:absolute;left:2347px;top:805px;width:44px;height:35px;overflow:hidden"><div class="t" style="left:5px;top:6.1px;font-size:26.5px;line-height:26.5px;color:#1a1a1a">2…</div></div>
<div style="position:absolute;left:2393px;top:805px;width:44px;height:35px;overflow:hidden"><div class="t" style="left:5px;top:6.1px;font-size:26.5px;line-height:26.5px;color:#1a1a1a">39</div></div>
<div style="position:absolute;left:2439px;top:805px;width:44px;height:35px;overflow:hidden"><div class="t" style="left:5px;top:6.1px;font-size:26.5px;line-height:26.5px;color:#1a1a1a">8…</div></div>
<div style="position:absolute;left:2485px;top:805px;width:45px;height:35px;overflow:hidden"><div class="t" style="left:5px;top:6.1px;font-size:26.5px;line-height:26.5px;color:#1a1a1a">O…</div></div>
<div class="r" style="left:1427px;top:840px;width:1104px;height:2px;background:#d2d2d2;"></div>
<div class="r" style="left:1427px;top:843px;width:1104px;height:36px;background:#f4f4f4;"></div>
<div style="position:absolute;left:1428px;top:843px;width:202px;height:35px;overflow:hidden"><div class="t" style="left:5px;top:6.1px;font-size:26.5px;line-height:26.5px;color:#1a1a1a">40.02-42.02 sec</div></div>
<div style="position:absolute;left:1632px;top:843px;width:144px;height:35px;overflow:hidden"><div class="t" style="left:5px;top:6.1px;font-size:26.5px;line-height:26.5px;color:#1a1a1a">154.62 MB</div></div>
<div style="position:absolute;left:1778px;top:843px;width:166px;height:35px;overflow:hidden"><div class="t" style="left:5px;top:6.1px;font-size:26.5px;line-height:26.5px;color:#1a1a1a">648.27 Mbps</div></div>
<div style="position:absolute;left:1946px;top:843px;width:118px;height:35px;overflow:hidden"><div class="t" style="left:5px;top:6.1px;font-size:26.5px;line-height:26.5px;color:#1a1a1a">WiFi</div></div>
<div style="position:absolute;left:2066px;top:843px;width:101px;height:35px;overflow:hidden"><div class="t" style="left:5px;top:6.1px;font-size:26.5px;line-height:26.5px;color:#1a1a1a">ASU…</div></div>
<div style="position:absolute;left:2169px;top:843px;width:84px;height:35px;overflow:hidden"><div class="t" style="left:5px;top:6.1px;font-size:26.5px;line-height:26.5px;color:#1a1a1a">10:…</div></div>
<div style="position:absolute;left:2255px;top:843px;width:44px;height:35px;overflow:hidden"><div class="t" style="left:5px;top:6.1px;font-size:26.5px;line-height:26.5px;color:#1a1a1a">-…</div></div>
<div style="position:absolute;left:2301px;top:843px;width:44px;height:35px;overflow:hidden"><div class="t" style="left:5px;top:6.1px;font-size:26.5px;line-height:26.5px;color:#1a1a1a">-…</div></div>
<div style="position:absolute;left:2347px;top:843px;width:44px;height:35px;overflow:hidden"><div class="t" style="left:5px;top:6.1px;font-size:26.5px;line-height:26.5px;color:#1a1a1a">2…</div></div>
<div style="position:absolute;left:2393px;top:843px;width:44px;height:35px;overflow:hidden"><div class="t" style="left:5px;top:6.1px;font-size:26.5px;line-height:26.5px;color:#1a1a1a">39</div></div>
<div style="position:absolute;left:2439px;top:843px;width:44px;height:35px;overflow:hidden"><div class="t" style="left:5px;top:6.1px;font-size:26.5px;line-height:26.5px;color:#1a1a1a">8…</div></div>
<div style="position:absolute;left:2485px;top:843px;width:45px;height:35px;overflow:hidden"><div class="t" style="left:5px;top:6.1px;font-size:26.5px;line-height:26.5px;color:#1a1a1a">O…</div></div>
<div class="r" style="left:1427px;top:878px;width:1104px;height:2px;background:#d2d2d2;"></div>
<div style="position:absolute;left:1428px;top:881px;width:202px;height:35px;overflow:hidden"><div class="t" style="left:5px;top:6.1px;font-size:26.5px;line-height:26.5px;color:#1a1a1a">38.02-40.02 sec</div></div>
<div style="position:absolute;left:1632px;top:881px;width:144px;height:35px;overflow:hidden"><div class="t" style="left:5px;top:6.1px;font-size:26.5px;line-height:26.5px;color:#1a1a1a">151.75 MB</div></div>
<div style="position:absolute;left:1778px;top:881px;width:166px;height:35px;overflow:hidden"><div class="t" style="left:5px;top:6.1px;font-size:26.5px;line-height:26.5px;color:#1a1a1a">636.42 Mbps</div></div>
<div style="position:absolute;left:1946px;top:881px;width:118px;height:35px;overflow:hidden"><div class="t" style="left:5px;top:6.1px;font-size:26.5px;line-height:26.5px;color:#1a1a1a">WiFi</div></div>
<div style="position:absolute;left:2066px;top:881px;width:101px;height:35px;overflow:hidden"><div class="t" style="left:5px;top:6.1px;font-size:26.5px;line-height:26.5px;color:#1a1a1a">ASU…</div></div>
<div style="position:absolute;left:2169px;top:881px;width:84px;height:35px;overflow:hidden"><div class="t" style="left:5px;top:6.1px;font-size:26.5px;line-height:26.5px;color:#1a1a1a">10:…</div></div>
<div style="position:absolute;left:2255px;top:881px;width:44px;height:35px;overflow:hidden"><div class="t" style="left:5px;top:6.1px;font-size:26.5px;line-height:26.5px;color:#1a1a1a">-…</div></div>
<div style="position:absolute;left:2301px;top:881px;width:44px;height:35px;overflow:hidden"><div class="t" style="left:5px;top:6.1px;font-size:26.5px;line-height:26.5px;color:#1a1a1a">-…</div></div>
<div style="position:absolute;left:2347px;top:881px;width:44px;height:35px;overflow:hidden"><div class="t" style="left:5px;top:6.1px;font-size:26.5px;line-height:26.5px;color:#1a1a1a">2…</div></div>
<div style="position:absolute;left:2393px;top:881px;width:44px;height:35px;overflow:hidden"><div class="t" style="left:5px;top:6.1px;font-size:26.5px;line-height:26.5px;color:#1a1a1a">40</div></div>
<div style="position:absolute;left:2439px;top:881px;width:44px;height:35px;overflow:hidden"><div class="t" style="left:5px;top:6.1px;font-size:26.5px;line-height:26.5px;color:#1a1a1a">8…</div></div>
<div style="position:absolute;left:2485px;top:881px;width:45px;height:35px;overflow:hidden"><div class="t" style="left:5px;top:6.1px;font-size:26.5px;line-height:26.5px;color:#1a1a1a">O…</div></div>
<div class="r" style="left:1427px;top:916px;width:1104px;height:2px;background:#d2d2d2;"></div>
<div class="r" style="left:1427px;top:919px;width:1104px;height:36px;background:#f4f4f4;"></div>
<div style="position:absolute;left:1428px;top:919px;width:202px;height:35px;overflow:hidden"><div class="t" style="left:5px;top:6.1px;font-size:26.5px;line-height:26.5px;color:#1a1a1a">36.02-38.02 sec</div></div>
<div style="position:absolute;left:1632px;top:919px;width:144px;height:35px;overflow:hidden"><div class="t" style="left:5px;top:6.1px;font-size:26.5px;line-height:26.5px;color:#1a1a1a">152.38 MB</div></div>
<div style="position:absolute;left:1778px;top:919px;width:166px;height:35px;overflow:hidden"><div class="t" style="left:5px;top:6.1px;font-size:26.5px;line-height:26.5px;color:#1a1a1a">638.82 Mbps</div></div>
<div style="position:absolute;left:1946px;top:919px;width:118px;height:35px;overflow:hidden"><div class="t" style="left:5px;top:6.1px;font-size:26.5px;line-height:26.5px;color:#1a1a1a">WiFi</div></div>
<div style="position:absolute;left:2066px;top:919px;width:101px;height:35px;overflow:hidden"><div class="t" style="left:5px;top:6.1px;font-size:26.5px;line-height:26.5px;color:#1a1a1a">ASU…</div></div>
<div style="position:absolute;left:2169px;top:919px;width:84px;height:35px;overflow:hidden"><div class="t" style="left:5px;top:6.1px;font-size:26.5px;line-height:26.5px;color:#1a1a1a">10:…</div></div>
<div style="position:absolute;left:2255px;top:919px;width:44px;height:35px;overflow:hidden"><div class="t" style="left:5px;top:6.1px;font-size:26.5px;line-height:26.5px;color:#1a1a1a">-…</div></div>
<div style="position:absolute;left:2301px;top:919px;width:44px;height:35px;overflow:hidden"><div class="t" style="left:5px;top:6.1px;font-size:26.5px;line-height:26.5px;color:#1a1a1a">-…</div></div>
<div style="position:absolute;left:2347px;top:919px;width:44px;height:35px;overflow:hidden"><div class="t" style="left:5px;top:6.1px;font-size:26.5px;line-height:26.5px;color:#1a1a1a">2…</div></div>
<div style="position:absolute;left:2393px;top:919px;width:44px;height:35px;overflow:hidden"><div class="t" style="left:5px;top:6.1px;font-size:26.5px;line-height:26.5px;color:#1a1a1a">39</div></div>
<div style="position:absolute;left:2439px;top:919px;width:44px;height:35px;overflow:hidden"><div class="t" style="left:5px;top:6.1px;font-size:26.5px;line-height:26.5px;color:#1a1a1a">8…</div></div>
<div style="position:absolute;left:2485px;top:919px;width:45px;height:35px;overflow:hidden"><div class="t" style="left:5px;top:6.1px;font-size:26.5px;line-height:26.5px;color:#1a1a1a">O…</div></div>
<div class="r" style="left:1427px;top:954px;width:1104px;height:2px;background:#d2d2d2;"></div>
<div style="position:absolute;left:1428px;top:957px;width:202px;height:35px;overflow:hidden"><div class="t" style="left:5px;top:6.1px;font-size:26.5px;line-height:26.5px;color:#1a1a1a">34.02-36.02 sec</div></div>
<div style="position:absolute;left:1632px;top:957px;width:144px;height:35px;overflow:hidden"><div class="t" style="left:5px;top:6.1px;font-size:26.5px;line-height:26.5px;color:#1a1a1a">159.50 MB</div></div>
<div style="position:absolute;left:1778px;top:957px;width:166px;height:35px;overflow:hidden"><div class="t" style="left:5px;top:6.1px;font-size:26.5px;line-height:26.5px;color:#1a1a1a">668.71 Mbps</div></div>
<div style="position:absolute;left:1946px;top:957px;width:118px;height:35px;overflow:hidden"><div class="t" style="left:5px;top:6.1px;font-size:26.5px;line-height:26.5px;color:#1a1a1a">WiFi</div></div>
<div style="position:absolute;left:2066px;top:957px;width:101px;height:35px;overflow:hidden"><div class="t" style="left:5px;top:6.1px;font-size:26.5px;line-height:26.5px;color:#1a1a1a">ASU…</div></div>
<div style="position:absolute;left:2169px;top:957px;width:84px;height:35px;overflow:hidden"><div class="t" style="left:5px;top:6.1px;font-size:26.5px;line-height:26.5px;color:#1a1a1a">10:…</div></div>
<div style="position:absolute;left:2255px;top:957px;width:44px;height:35px;overflow:hidden"><div class="t" style="left:5px;top:6.1px;font-size:26.5px;line-height:26.5px;color:#1a1a1a">-…</div></div>
<div style="position:absolute;left:2301px;top:957px;width:44px;height:35px;overflow:hidden"><div class="t" style="left:5px;top:6.1px;font-size:26.5px;line-height:26.5px;color:#1a1a1a">-…</div></div>
<div style="position:absolute;left:2347px;top:957px;width:44px;height:35px;overflow:hidden"><div class="t" style="left:5px;top:6.1px;font-size:26.5px;line-height:26.5px;color:#1a1a1a">2…</div></div>
<div style="position:absolute;left:2393px;top:957px;width:44px;height:35px;overflow:hidden"><div class="t" style="left:5px;top:6.1px;font-size:26.5px;line-height:26.5px;color:#1a1a1a">39</div></div>
<div style="position:absolute;left:2439px;top:957px;width:44px;height:35px;overflow:hidden"><div class="t" style="left:5px;top:6.1px;font-size:26.5px;line-height:26.5px;color:#1a1a1a">8…</div></div>
<div style="position:absolute;left:2485px;top:957px;width:45px;height:35px;overflow:hidden"><div class="t" style="left:5px;top:6.1px;font-size:26.5px;line-height:26.5px;color:#1a1a1a">O…</div></div>
<div class="r" style="left:1427px;top:992px;width:1104px;height:2px;background:#d2d2d2;"></div>
<div class="r" style="left:1427px;top:995px;width:1104px;height:36px;background:#f4f4f4;"></div>
<div style="position:absolute;left:1428px;top:995px;width:202px;height:35px;overflow:hidden"><div class="t" style="left:5px;top:6.1px;font-size:26.5px;line-height:26.5px;color:#1a1a1a">32.02-34.02 sec</div></div>
<div style="position:absolute;left:1632px;top:995px;width:144px;height:35px;overflow:hidden"><div class="t" style="left:5px;top:6.1px;font-size:26.5px;line-height:26.5px;color:#1a1a1a">152.62 MB</div></div>
<div style="position:absolute;left:1778px;top:995px;width:166px;height:35px;overflow:hidden"><div class="t" style="left:5px;top:6.1px;font-size:26.5px;line-height:26.5px;color:#1a1a1a">639.93 Mbps</div></div>
<div style="position:absolute;left:1946px;top:995px;width:118px;height:35px;overflow:hidden"><div class="t" style="left:5px;top:6.1px;font-size:26.5px;line-height:26.5px;color:#1a1a1a">WiFi</div></div>
<div style="position:absolute;left:2066px;top:995px;width:101px;height:35px;overflow:hidden"><div class="t" style="left:5px;top:6.1px;font-size:26.5px;line-height:26.5px;color:#1a1a1a">ASU…</div></div>
<div style="position:absolute;left:2169px;top:995px;width:84px;height:35px;overflow:hidden"><div class="t" style="left:5px;top:6.1px;font-size:26.5px;line-height:26.5px;color:#1a1a1a">10:…</div></div>
<div style="position:absolute;left:2255px;top:995px;width:44px;height:35px;overflow:hidden"><div class="t" style="left:5px;top:6.1px;font-size:26.5px;line-height:26.5px;color:#1a1a1a">-…</div></div>
<div style="position:absolute;left:2301px;top:995px;width:44px;height:35px;overflow:hidden"><div class="t" style="left:5px;top:6.1px;font-size:26.5px;line-height:26.5px;color:#1a1a1a">-…</div></div>
<div style="position:absolute;left:2347px;top:995px;width:44px;height:35px;overflow:hidden"><div class="t" style="left:5px;top:6.1px;font-size:26.5px;line-height:26.5px;color:#1a1a1a">2…</div></div>
<div style="position:absolute;left:2393px;top:995px;width:44px;height:35px;overflow:hidden"><div class="t" style="left:5px;top:6.1px;font-size:26.5px;line-height:26.5px;color:#1a1a1a">39</div></div>
<div style="position:absolute;left:2439px;top:995px;width:44px;height:35px;overflow:hidden"><div class="t" style="left:5px;top:6.1px;font-size:26.5px;line-height:26.5px;color:#1a1a1a">8…</div></div>
<div style="position:absolute;left:2485px;top:995px;width:45px;height:35px;overflow:hidden"><div class="t" style="left:5px;top:6.1px;font-size:26.5px;line-height:26.5px;color:#1a1a1a">O…</div></div>
<div class="r" style="left:1427px;top:1030px;width:1104px;height:2px;background:#d2d2d2;"></div>
<div style="position:absolute;left:1428px;top:1033px;width:202px;height:35px;overflow:hidden"><div class="t" style="left:5px;top:6.1px;font-size:26.5px;line-height:26.5px;color:#1a1a1a">30.02-32.02 sec</div></div>
<div style="position:absolute;left:1632px;top:1033px;width:144px;height:35px;overflow:hidden"><div class="t" style="left:5px;top:6.1px;font-size:26.5px;line-height:26.5px;color:#1a1a1a">153.38 MB</div></div>
<div style="position:absolute;left:1778px;top:1033px;width:166px;height:35px;overflow:hidden"><div class="t" style="left:5px;top:6.1px;font-size:26.5px;line-height:26.5px;color:#1a1a1a">643.04 Mbps</div></div>
<div style="position:absolute;left:1946px;top:1033px;width:118px;height:35px;overflow:hidden"><div class="t" style="left:5px;top:6.1px;font-size:26.5px;line-height:26.5px;color:#1a1a1a">WiFi</div></div>
<div style="position:absolute;left:2066px;top:1033px;width:101px;height:35px;overflow:hidden"><div class="t" style="left:5px;top:6.1px;font-size:26.5px;line-height:26.5px;color:#1a1a1a">ASU…</div></div>
<div style="position:absolute;left:2169px;top:1033px;width:84px;height:35px;overflow:hidden"><div class="t" style="left:5px;top:6.1px;font-size:26.5px;line-height:26.5px;color:#1a1a1a">10:…</div></div>
<div style="position:absolute;left:2255px;top:1033px;width:44px;height:35px;overflow:hidden"><div class="t" style="left:5px;top:6.1px;font-size:26.5px;line-height:26.5px;color:#1a1a1a">-…</div></div>
<div style="position:absolute;left:2301px;top:1033px;width:44px;height:35px;overflow:hidden"><div class="t" style="left:5px;top:6.1px;font-size:26.5px;line-height:26.5px;color:#1a1a1a">-…</div></div>
<div style="position:absolute;left:2347px;top:1033px;width:44px;height:35px;overflow:hidden"><div class="t" style="left:5px;top:6.1px;font-size:26.5px;line-height:26.5px;color:#1a1a1a">2…</div></div>
<div style="position:absolute;left:2393px;top:1033px;width:44px;height:35px;overflow:hidden"><div class="t" style="left:5px;top:6.1px;font-size:26.5px;line-height:26.5px;color:#1a1a1a">39</div></div>
<div style="position:absolute;left:2439px;top:1033px;width:44px;height:35px;overflow:hidden"><div class="t" style="left:5px;top:6.1px;font-size:26.5px;line-height:26.5px;color:#1a1a1a">8…</div></div>
<div style="position:absolute;left:2485px;top:1033px;width:45px;height:35px;overflow:hidden"><div class="t" style="left:5px;top:6.1px;font-size:26.5px;line-height:26.5px;color:#1a1a1a">O…</div></div>
<div class="r" style="left:1427px;top:1068px;width:1104px;height:2px;background:#d2d2d2;"></div>
<div class="r" style="left:1427px;top:1071px;width:1104px;height:36px;background:#f4f4f4;"></div>
<div style="position:absolute;left:1428px;top:1071px;width:202px;height:35px;overflow:hidden"><div class="t" style="left:5px;top:6.1px;font-size:26.5px;line-height:26.5px;color:#1a1a1a">28.02-30.02 sec</div></div>
<div style="position:absolute;left:1632px;top:1071px;width:144px;height:35px;overflow:hidden"><div class="t" style="left:5px;top:6.1px;font-size:26.5px;line-height:26.5px;color:#1a1a1a">151.62 MB</div></div>
<div style="position:absolute;left:1778px;top:1071px;width:166px;height:35px;overflow:hidden"><div class="t" style="left:5px;top:6.1px;font-size:26.5px;line-height:26.5px;color:#1a1a1a">634.93 Mbps</div></div>
<div style="position:absolute;left:1946px;top:1071px;width:118px;height:35px;overflow:hidden"><div class="t" style="left:5px;top:6.1px;font-size:26.5px;line-height:26.5px;color:#1a1a1a">WiFi</div></div>
<div style="position:absolute;left:2066px;top:1071px;width:101px;height:35px;overflow:hidden"><div class="t" style="left:5px;top:6.1px;font-size:26.5px;line-height:26.5px;color:#1a1a1a">ASU…</div></div>
<div style="position:absolute;left:2169px;top:1071px;width:84px;height:35px;overflow:hidden"><div class="t" style="left:5px;top:6.1px;font-size:26.5px;line-height:26.5px;color:#1a1a1a">10:…</div></div>
<div style="position:absolute;left:2255px;top:1071px;width:44px;height:35px;overflow:hidden"><div class="t" style="left:5px;top:6.1px;font-size:26.5px;line-height:26.5px;color:#1a1a1a">-…</div></div>
<div style="position:absolute;left:2301px;top:1071px;width:44px;height:35px;overflow:hidden"><div class="t" style="left:5px;top:6.1px;font-size:26.5px;line-height:26.5px;color:#1a1a1a">-…</div></div>
<div style="position:absolute;left:2347px;top:1071px;width:44px;height:35px;overflow:hidden"><div class="t" style="left:5px;top:6.1px;font-size:26.5px;line-height:26.5px;color:#1a1a1a">2…</div></div>
<div style="position:absolute;left:2393px;top:1071px;width:44px;height:35px;overflow:hidden"><div class="t" style="left:5px;top:6.1px;font-size:26.5px;line-height:26.5px;color:#1a1a1a">40</div></div>
<div style="position:absolute;left:2439px;top:1071px;width:44px;height:35px;overflow:hidden"><div class="t" style="left:5px;top:6.1px;font-size:26.5px;line-height:26.5px;color:#1a1a1a">8…</div></div>
<div style="position:absolute;left:2485px;top:1071px;width:45px;height:35px;overflow:hidden"><div class="t" style="left:5px;top:6.1px;font-size:26.5px;line-height:26.5px;color:#1a1a1a">O…</div></div>
<div class="r" style="left:1427px;top:1106px;width:1104px;height:2px;background:#d2d2d2;"></div>
<div style="position:absolute;left:1428px;top:1109px;width:202px;height:35px;overflow:hidden"><div class="t" style="left:5px;top:6.1px;font-size:26.5px;line-height:26.5px;color:#1a1a1a">26.02-28.02 sec</div></div>
<div style="position:absolute;left:1632px;top:1109px;width:144px;height:35px;overflow:hidden"><div class="t" style="left:5px;top:6.1px;font-size:26.5px;line-height:26.5px;color:#1a1a1a">153.25 MB</div></div>
<div style="position:absolute;left:1778px;top:1109px;width:166px;height:35px;overflow:hidden"><div class="t" style="left:5px;top:6.1px;font-size:26.5px;line-height:26.5px;color:#1a1a1a">642.50 Mbps</div></div>
<div style="position:absolute;left:1946px;top:1109px;width:118px;height:35px;overflow:hidden"><div class="t" style="left:5px;top:6.1px;font-size:26.5px;line-height:26.5px;color:#1a1a1a">WiFi</div></div>
<div style="position:absolute;left:2066px;top:1109px;width:101px;height:35px;overflow:hidden"><div class="t" style="left:5px;top:6.1px;font-size:26.5px;line-height:26.5px;color:#1a1a1a">ASU…</div></div>
<div style="position:absolute;left:2169px;top:1109px;width:84px;height:35px;overflow:hidden"><div class="t" style="left:5px;top:6.1px;font-size:26.5px;line-height:26.5px;color:#1a1a1a">10:…</div></div>
<div style="position:absolute;left:2255px;top:1109px;width:44px;height:35px;overflow:hidden"><div class="t" style="left:5px;top:6.1px;font-size:26.5px;line-height:26.5px;color:#1a1a1a">-…</div></div>
<div style="position:absolute;left:2301px;top:1109px;width:44px;height:35px;overflow:hidden"><div class="t" style="left:5px;top:6.1px;font-size:26.5px;line-height:26.5px;color:#1a1a1a">-…</div></div>
<div style="position:absolute;left:2347px;top:1109px;width:44px;height:35px;overflow:hidden"><div class="t" style="left:5px;top:6.1px;font-size:26.5px;line-height:26.5px;color:#1a1a1a">2…</div></div>
<div style="position:absolute;left:2393px;top:1109px;width:44px;height:35px;overflow:hidden"><div class="t" style="left:5px;top:6.1px;font-size:26.5px;line-height:26.5px;color:#1a1a1a">39</div></div>
<div style="position:absolute;left:2439px;top:1109px;width:44px;height:35px;overflow:hidden"><div class="t" style="left:5px;top:6.1px;font-size:26.5px;line-height:26.5px;color:#1a1a1a">8…</div></div>
<div style="position:absolute;left:2485px;top:1109px;width:45px;height:35px;overflow:hidden"><div class="t" style="left:5px;top:6.1px;font-size:26.5px;line-height:26.5px;color:#1a1a1a">O…</div></div>
<div class="r" style="left:1427px;top:1144px;width:1104px;height:2px;background:#d2d2d2;"></div>
<div class="r" style="left:1427px;top:1147px;width:1104px;height:36px;background:#f4f4f4;"></div>
<div style="position:absolute;left:1428px;top:1147px;width:202px;height:35px;overflow:hidden"><div class="t" style="left:5px;top:6.1px;font-size:26.5px;line-height:26.5px;color:#1a1a1a">24.01-26.02 sec</div></div>
<div style="position:absolute;left:1632px;top:1147px;width:144px;height:35px;overflow:hidden"><div class="t" style="left:5px;top:6.1px;font-size:26.5px;line-height:26.5px;color:#1a1a1a">152.00 MB</div></div>
<div style="position:absolute;left:1778px;top:1147px;width:166px;height:35px;overflow:hidden"><div class="t" style="left:5px;top:6.1px;font-size:26.5px;line-height:26.5px;color:#1a1a1a">636.49 Mbps</div></div>
<div style="position:absolute;left:1946px;top:1147px;width:118px;height:35px;overflow:hidden"><div class="t" style="left:5px;top:6.1px;font-size:26.5px;line-height:26.5px;color:#1a1a1a">WiFi</div></div>
<div style="position:absolute;left:2066px;top:1147px;width:101px;height:35px;overflow:hidden"><div class="t" style="left:5px;top:6.1px;font-size:26.5px;line-height:26.5px;color:#1a1a1a">ASU…</div></div>
<div style="position:absolute;left:2169px;top:1147px;width:84px;height:35px;overflow:hidden"><div class="t" style="left:5px;top:6.1px;font-size:26.5px;line-height:26.5px;color:#1a1a1a">10:…</div></div>
<div style="position:absolute;left:2255px;top:1147px;width:44px;height:35px;overflow:hidden"><div class="t" style="left:5px;top:6.1px;font-size:26.5px;line-height:26.5px;color:#1a1a1a">-…</div></div>
<div style="position:absolute;left:2301px;top:1147px;width:44px;height:35px;overflow:hidden"><div class="t" style="left:5px;top:6.1px;font-size:26.5px;line-height:26.5px;color:#1a1a1a">-…</div></div>
<div style="position:absolute;left:2347px;top:1147px;width:44px;height:35px;overflow:hidden"><div class="t" style="left:5px;top:6.1px;font-size:26.5px;line-height:26.5px;color:#1a1a1a">2…</div></div>
<div style="position:absolute;left:2393px;top:1147px;width:44px;height:35px;overflow:hidden"><div class="t" style="left:5px;top:6.1px;font-size:26.5px;line-height:26.5px;color:#1a1a1a">38</div></div>
<div style="position:absolute;left:2439px;top:1147px;width:44px;height:35px;overflow:hidden"><div class="t" style="left:5px;top:6.1px;font-size:26.5px;line-height:26.5px;color:#1a1a1a">8…</div></div>
<div style="position:absolute;left:2485px;top:1147px;width:45px;height:35px;overflow:hidden"><div class="t" style="left:5px;top:6.1px;font-size:26.5px;line-height:26.5px;color:#1a1a1a">O…</div></div>
<div class="r" style="left:1427px;top:1182px;width:1104px;height:2px;background:#d2d2d2;"></div>
<div style="position:absolute;left:1428px;top:1185px;width:202px;height:35px;overflow:hidden"><div class="t" style="left:5px;top:6.1px;font-size:26.5px;line-height:26.5px;color:#1a1a1a">22.01-24.01 sec</div></div>
<div style="position:absolute;left:1632px;top:1185px;width:144px;height:35px;overflow:hidden"><div class="t" style="left:5px;top:6.1px;font-size:26.5px;line-height:26.5px;color:#1a1a1a">152.12 MB</div></div>
<div style="position:absolute;left:1778px;top:1185px;width:166px;height:35px;overflow:hidden"><div class="t" style="left:5px;top:6.1px;font-size:26.5px;line-height:26.5px;color:#1a1a1a">636.87 Mbps</div></div>
<div style="position:absolute;left:1946px;top:1185px;width:118px;height:35px;overflow:hidden"><div class="t" style="left:5px;top:6.1px;font-size:26.5px;line-height:26.5px;color:#1a1a1a">WiFi</div></div>
<div style="position:absolute;left:2066px;top:1185px;width:101px;height:35px;overflow:hidden"><div class="t" style="left:5px;top:6.1px;font-size:26.5px;line-height:26.5px;color:#1a1a1a">ASU…</div></div>
<div style="position:absolute;left:2169px;top:1185px;width:84px;height:35px;overflow:hidden"><div class="t" style="left:5px;top:6.1px;font-size:26.5px;line-height:26.5px;color:#1a1a1a">10:…</div></div>
<div style="position:absolute;left:2255px;top:1185px;width:44px;height:35px;overflow:hidden"><div class="t" style="left:5px;top:6.1px;font-size:26.5px;line-height:26.5px;color:#1a1a1a">-…</div></div>
<div style="position:absolute;left:2301px;top:1185px;width:44px;height:35px;overflow:hidden"><div class="t" style="left:5px;top:6.1px;font-size:26.5px;line-height:26.5px;color:#1a1a1a">-…</div></div>
<div style="position:absolute;left:2347px;top:1185px;width:44px;height:35px;overflow:hidden"><div class="t" style="left:5px;top:6.1px;font-size:26.5px;line-height:26.5px;color:#1a1a1a">2…</div></div>
<div style="position:absolute;left:2393px;top:1185px;width:44px;height:35px;overflow:hidden"><div class="t" style="left:5px;top:6.1px;font-size:26.5px;line-height:26.5px;color:#1a1a1a">38</div></div>
<div style="position:absolute;left:2439px;top:1185px;width:44px;height:35px;overflow:hidden"><div class="t" style="left:5px;top:6.1px;font-size:26.5px;line-height:26.5px;color:#1a1a1a">8…</div></div>
<div style="position:absolute;left:2485px;top:1185px;width:45px;height:35px;overflow:hidden"><div class="t" style="left:5px;top:6.1px;font-size:26.5px;line-height:26.5px;color:#1a1a1a">O…</div></div>
<div class="r" style="left:1427px;top:1220px;width:1104px;height:2px;background:#d2d2d2;"></div>
<div class="r" style="left:1427px;top:1223px;width:1104px;height:36px;background:#f4f4f4;"></div>
<div style="position:absolute;left:1428px;top:1223px;width:202px;height:35px;overflow:hidden"><div class="t" style="left:5px;top:6.1px;font-size:26.5px;line-height:26.5px;color:#1a1a1a">20.01-22.01 sec</div></div>
<div style="position:absolute;left:1632px;top:1223px;width:144px;height:35px;overflow:hidden"><div class="t" style="left:5px;top:6.1px;font-size:26.5px;line-height:26.5px;color:#1a1a1a">150.62 MB</div></div>
<div style="position:absolute;left:1778px;top:1223px;width:166px;height:35px;overflow:hidden"><div class="t" style="left:5px;top:6.1px;font-size:26.5px;line-height:26.5px;color:#1a1a1a">631.62 Mbps</div></div>
<div style="position:absolute;left:1946px;top:1223px;width:118px;height:35px;overflow:hidden"><div class="t" style="left:5px;top:6.1px;font-size:26.5px;line-height:26.5px;color:#1a1a1a">WiFi</div></div>
<div style="position:absolute;left:2066px;top:1223px;width:101px;height:35px;overflow:hidden"><div class="t" style="left:5px;top:6.1px;font-size:26.5px;line-height:26.5px;color:#1a1a1a">ASU…</div></div>
<div style="position:absolute;left:2169px;top:1223px;width:84px;height:35px;overflow:hidden"><div class="t" style="left:5px;top:6.1px;font-size:26.5px;line-height:26.5px;color:#1a1a1a">10:…</div></div>
<div style="position:absolute;left:2255px;top:1223px;width:44px;height:35px;overflow:hidden"><div class="t" style="left:5px;top:6.1px;font-size:26.5px;line-height:26.5px;color:#1a1a1a">-…</div></div>
<div style="position:absolute;left:2301px;top:1223px;width:44px;height:35px;overflow:hidden"><div class="t" style="left:5px;top:6.1px;font-size:26.5px;line-height:26.5px;color:#1a1a1a">-…</div></div>
<div style="position:absolute;left:2347px;top:1223px;width:44px;height:35px;overflow:hidden"><div class="t" style="left:5px;top:6.1px;font-size:26.5px;line-height:26.5px;color:#1a1a1a">2…</div></div>
<div style="position:absolute;left:2393px;top:1223px;width:44px;height:35px;overflow:hidden"><div class="t" style="left:5px;top:6.1px;font-size:26.5px;line-height:26.5px;color:#1a1a1a">40</div></div>
<div style="position:absolute;left:2439px;top:1223px;width:44px;height:35px;overflow:hidden"><div class="t" style="left:5px;top:6.1px;font-size:26.5px;line-height:26.5px;color:#1a1a1a">8…</div></div>
<div style="position:absolute;left:2485px;top:1223px;width:45px;height:35px;overflow:hidden"><div class="t" style="left:5px;top:6.1px;font-size:26.5px;line-height:26.5px;color:#1a1a1a">O…</div></div>
<div class="r" style="left:1427px;top:1258px;width:1104px;height:2px;background:#d2d2d2;"></div>
<div style="position:absolute;left:1428px;top:1261px;width:202px;height:35px;overflow:hidden"><div class="t" style="left:5px;top:6.1px;font-size:26.5px;line-height:26.5px;color:#1a1a1a">18.01-20.01 sec</div></div>
<div style="position:absolute;left:1632px;top:1261px;width:144px;height:35px;overflow:hidden"><div class="t" style="left:5px;top:6.1px;font-size:26.5px;line-height:26.5px;color:#1a1a1a">149.88 MB</div></div>
<div style="position:absolute;left:1778px;top:1261px;width:166px;height:35px;overflow:hidden"><div class="t" style="left:5px;top:6.1px;font-size:26.5px;line-height:26.5px;color:#1a1a1a">628.57 Mbps</div></div>
<div style="position:absolute;left:1946px;top:1261px;width:118px;height:35px;overflow:hidden"><div class="t" style="left:5px;top:6.1px;font-size:26.5px;line-height:26.5px;color:#1a1a1a">WiFi</div></div>
<div style="position:absolute;left:2066px;top:1261px;width:101px;height:35px;overflow:hidden"><div class="t" style="left:5px;top:6.1px;font-size:26.5px;line-height:26.5px;color:#1a1a1a">ASU…</div></div>
<div style="position:absolute;left:2169px;top:1261px;width:84px;height:35px;overflow:hidden"><div class="t" style="left:5px;top:6.1px;font-size:26.5px;line-height:26.5px;color:#1a1a1a">10:…</div></div>
<div style="position:absolute;left:2255px;top:1261px;width:44px;height:35px;overflow:hidden"><div class="t" style="left:5px;top:6.1px;font-size:26.5px;line-height:26.5px;color:#1a1a1a">-…</div></div>
<div style="position:absolute;left:2301px;top:1261px;width:44px;height:35px;overflow:hidden"><div class="t" style="left:5px;top:6.1px;font-size:26.5px;line-height:26.5px;color:#1a1a1a">-…</div></div>
<div style="position:absolute;left:2347px;top:1261px;width:44px;height:35px;overflow:hidden"><div class="t" style="left:5px;top:6.1px;font-size:26.5px;line-height:26.5px;color:#1a1a1a">2…</div></div>
<div style="position:absolute;left:2393px;top:1261px;width:44px;height:35px;overflow:hidden"><div class="t" style="left:5px;top:6.1px;font-size:26.5px;line-height:26.5px;color:#1a1a1a">38</div></div>
<div style="position:absolute;left:2439px;top:1261px;width:44px;height:35px;overflow:hidden"><div class="t" style="left:5px;top:6.1px;font-size:26.5px;line-height:26.5px;color:#1a1a1a">8…</div></div>
<div style="position:absolute;left:2485px;top:1261px;width:45px;height:35px;overflow:hidden"><div class="t" style="left:5px;top:6.1px;font-size:26.5px;line-height:26.5px;color:#1a1a1a">O…</div></div>
<div class="r" style="left:1427px;top:1296px;width:1104px;height:2px;background:#d2d2d2;"></div>
<div class="r" style="left:1427px;top:1299px;width:1104px;height:36px;background:#f4f4f4;"></div>
<div style="position:absolute;left:1428px;top:1299px;width:202px;height:35px;overflow:hidden"><div class="t" style="left:5px;top:6.1px;font-size:26.5px;line-height:26.5px;color:#1a1a1a">16.01-18.01 sec</div></div>
<div style="position:absolute;left:1632px;top:1299px;width:144px;height:35px;overflow:hidden"><div class="t" style="left:5px;top:6.1px;font-size:26.5px;line-height:26.5px;color:#1a1a1a">151.25 MB</div></div>
<div style="position:absolute;left:1778px;top:1299px;width:166px;height:35px;overflow:hidden"><div class="t" style="left:5px;top:6.1px;font-size:26.5px;line-height:26.5px;color:#1a1a1a">633.82 Mbps</div></div>
<div style="position:absolute;left:1946px;top:1299px;width:118px;height:35px;overflow:hidden"><div class="t" style="left:5px;top:6.1px;font-size:26.5px;line-height:26.5px;color:#1a1a1a">WiFi</div></div>
<div style="position:absolute;left:2066px;top:1299px;width:101px;height:35px;overflow:hidden"><div class="t" style="left:5px;top:6.1px;font-size:26.5px;line-height:26.5px;color:#1a1a1a">ASU…</div></div>
<div style="position:absolute;left:2169px;top:1299px;width:84px;height:35px;overflow:hidden"><div class="t" style="left:5px;top:6.1px;font-size:26.5px;line-height:26.5px;color:#1a1a1a">10:…</div></div>
<div style="position:absolute;left:2255px;top:1299px;width:44px;height:35px;overflow:hidden"><div class="t" style="left:5px;top:6.1px;font-size:26.5px;line-height:26.5px;color:#1a1a1a">-…</div></div>
<div style="position:absolute;left:2301px;top:1299px;width:44px;height:35px;overflow:hidden"><div class="t" style="left:5px;top:6.1px;font-size:26.5px;line-height:26.5px;color:#1a1a1a">-…</div></div>
<div style="position:absolute;left:2347px;top:1299px;width:44px;height:35px;overflow:hidden"><div class="t" style="left:5px;top:6.1px;font-size:26.5px;line-height:26.5px;color:#1a1a1a">2…</div></div>
<div style="position:absolute;left:2393px;top:1299px;width:44px;height:35px;overflow:hidden"><div class="t" style="left:5px;top:6.1px;font-size:26.5px;line-height:26.5px;color:#1a1a1a">38</div></div>
<div style="position:absolute;left:2439px;top:1299px;width:44px;height:35px;overflow:hidden"><div class="t" style="left:5px;top:6.1px;font-size:26.5px;line-height:26.5px;color:#1a1a1a">8…</div></div>
<div style="position:absolute;left:2485px;top:1299px;width:45px;height:35px;overflow:hidden"><div class="t" style="left:5px;top:6.1px;font-size:26.5px;line-height:26.5px;color:#1a1a1a">O…</div></div>
<div class="r" style="left:1427px;top:1334px;width:1104px;height:2px;background:#d2d2d2;"></div>
<div style="position:absolute;left:1428px;top:1337px;width:202px;height:35px;overflow:hidden"><div class="t" style="left:5px;top:6.1px;font-size:26.5px;line-height:26.5px;color:#1a1a1a">14.01-16.01 sec</div></div>
<div style="position:absolute;left:1632px;top:1337px;width:144px;height:35px;overflow:hidden"><div class="t" style="left:5px;top:6.1px;font-size:26.5px;line-height:26.5px;color:#1a1a1a">148.38 MB</div></div>
<div style="position:absolute;left:1778px;top:1337px;width:166px;height:35px;overflow:hidden"><div class="t" style="left:5px;top:6.1px;font-size:26.5px;line-height:26.5px;color:#1a1a1a">622.27 Mbps</div></div>
<div style="position:absolute;left:1946px;top:1337px;width:118px;height:35px;overflow:hidden"><div class="t" style="left:5px;top:6.1px;font-size:26.5px;line-height:26.5px;color:#1a1a1a">WiFi</div></div>
<div style="position:absolute;left:2066px;top:1337px;width:101px;height:35px;overflow:hidden"><div class="t" style="left:5px;top:6.1px;font-size:26.5px;line-height:26.5px;color:#1a1a1a">ASU…</div></div>
<div style="position:absolute;left:2169px;top:1337px;width:84px;height:35px;overflow:hidden"><div class="t" style="left:5px;top:6.1px;font-size:26.5px;line-height:26.5px;color:#1a1a1a">10:…</div></div>
<div style="position:absolute;left:2255px;top:1337px;width:44px;height:35px;overflow:hidden"><div class="t" style="left:5px;top:6.1px;font-size:26.5px;line-height:26.5px;color:#1a1a1a">-…</div></div>
<div style="position:absolute;left:2301px;top:1337px;width:44px;height:35px;overflow:hidden"><div class="t" style="left:5px;top:6.1px;font-size:26.5px;line-height:26.5px;color:#1a1a1a">-…</div></div>
<div style="position:absolute;left:2347px;top:1337px;width:44px;height:35px;overflow:hidden"><div class="t" style="left:5px;top:6.1px;font-size:26.5px;line-height:26.5px;color:#1a1a1a">2…</div></div>
<div style="position:absolute;left:2393px;top:1337px;width:44px;height:35px;overflow:hidden"><div class="t" style="left:5px;top:6.1px;font-size:26.5px;line-height:26.5px;color:#1a1a1a">38</div></div>
<div style="position:absolute;left:2439px;top:1337px;width:44px;height:35px;overflow:hidden"><div class="t" style="left:5px;top:6.1px;font-size:26.5px;line-height:26.5px;color:#1a1a1a">8…</div></div>
<div style="position:absolute;left:2485px;top:1337px;width:45px;height:35px;overflow:hidden"><div class="t" style="left:5px;top:6.1px;font-size:26.5px;line-height:26.5px;color:#1a1a1a">O…</div></div>
<div class="r" style="left:1427px;top:1372px;width:1104px;height:2px;background:#d2d2d2;"></div>
<div class="r" style="left:1427px;top:1375px;width:1104px;height:36px;background:#f4f4f4;"></div>
<div style="position:absolute;left:1428px;top:1375px;width:202px;height:35px;overflow:hidden"><div class="t" style="left:5px;top:6.1px;font-size:26.5px;line-height:26.5px;color:#1a1a1a">12.01-14.01 sec</div></div>
<div style="position:absolute;left:1632px;top:1375px;width:144px;height:35px;overflow:hidden"><div class="t" style="left:5px;top:6.1px;font-size:26.5px;line-height:26.5px;color:#1a1a1a">140.00 MB</div></div>
<div style="position:absolute;left:1778px;top:1375px;width:166px;height:35px;overflow:hidden"><div class="t" style="left:5px;top:6.1px;font-size:26.5px;line-height:26.5px;color:#1a1a1a">586.78 Mbps</div></div>
<div style="position:absolute;left:1946px;top:1375px;width:118px;height:35px;overflow:hidden"><div class="t" style="left:5px;top:6.1px;font-size:26.5px;line-height:26.5px;color:#1a1a1a">WiFi</div></div>
<div style="position:absolute;left:2066px;top:1375px;width:101px;height:35px;overflow:hidden"><div class="t" style="left:5px;top:6.1px;font-size:26.5px;line-height:26.5px;color:#1a1a1a">ASU…</div></div>
<div style="position:absolute;left:2169px;top:1375px;width:84px;height:35px;overflow:hidden"><div class="t" style="left:5px;top:6.1px;font-size:26.5px;line-height:26.5px;color:#1a1a1a">10:…</div></div>
<div style="position:absolute;left:2255px;top:1375px;width:44px;height:35px;overflow:hidden"><div class="t" style="left:5px;top:6.1px;font-size:26.5px;line-height:26.5px;color:#1a1a1a">-…</div></div>
<div style="position:absolute;left:2301px;top:1375px;width:44px;height:35px;overflow:hidden"><div class="t" style="left:5px;top:6.1px;font-size:26.5px;line-height:26.5px;color:#1a1a1a">-…</div></div>
<div style="position:absolute;left:2347px;top:1375px;width:44px;height:35px;overflow:hidden"><div class="t" style="left:5px;top:6.1px;font-size:26.5px;line-height:26.5px;color:#1a1a1a">2…</div></div>
<div style="position:absolute;left:2393px;top:1375px;width:44px;height:35px;overflow:hidden"><div class="t" style="left:5px;top:6.1px;font-size:26.5px;line-height:26.5px;color:#1a1a1a">38</div></div>
<div style="position:absolute;left:2439px;top:1375px;width:44px;height:35px;overflow:hidden"><div class="t" style="left:5px;top:6.1px;font-size:26.5px;line-height:26.5px;color:#1a1a1a">8…</div></div>
<div style="position:absolute;left:2485px;top:1375px;width:45px;height:35px;overflow:hidden"><div class="t" style="left:5px;top:6.1px;font-size:26.5px;line-height:26.5px;color:#1a1a1a">O…</div></div>
<div class="r" style="left:1427px;top:1410px;width:1104px;height:2px;background:#d2d2d2;"></div>
<div style="position:absolute;left:1428px;top:1413px;width:202px;height:35px;overflow:hidden"><div class="t" style="left:5px;top:6.1px;font-size:26.5px;line-height:26.5px;color:#1a1a1a">10.00-12.01 sec</div></div>
<div style="position:absolute;left:1632px;top:1413px;width:144px;height:35px;overflow:hidden"><div class="t" style="left:5px;top:6.1px;font-size:26.5px;line-height:26.5px;color:#1a1a1a">163.62 MB</div></div>
<div style="position:absolute;left:1778px;top:1413px;width:166px;height:35px;overflow:hidden"><div class="t" style="left:5px;top:6.1px;font-size:26.5px;line-height:26.5px;color:#1a1a1a">685.89 Mbps</div></div>
<div style="position:absolute;left:1946px;top:1413px;width:118px;height:35px;overflow:hidden"><div class="t" style="left:5px;top:6.1px;font-size:26.5px;line-height:26.5px;color:#1a1a1a">WiFi</div></div>
<div style="position:absolute;left:2066px;top:1413px;width:101px;height:35px;overflow:hidden"><div class="t" style="left:5px;top:6.1px;font-size:26.5px;line-height:26.5px;color:#1a1a1a">ASU…</div></div>
<div style="position:absolute;left:2169px;top:1413px;width:84px;height:35px;overflow:hidden"><div class="t" style="left:5px;top:6.1px;font-size:26.5px;line-height:26.5px;color:#1a1a1a">10:…</div></div>
<div style="position:absolute;left:2255px;top:1413px;width:44px;height:35px;overflow:hidden"><div class="t" style="left:5px;top:6.1px;font-size:26.5px;line-height:26.5px;color:#1a1a1a">-…</div></div>
<div style="position:absolute;left:2301px;top:1413px;width:44px;height:35px;overflow:hidden"><div class="t" style="left:5px;top:6.1px;font-size:26.5px;line-height:26.5px;color:#1a1a1a">-…</div></div>
<div style="position:absolute;left:2347px;top:1413px;width:44px;height:35px;overflow:hidden"><div class="t" style="left:5px;top:6.1px;font-size:26.5px;line-height:26.5px;color:#1a1a1a">3…</div></div>
<div style="position:absolute;left:2393px;top:1413px;width:44px;height:35px;overflow:hidden"><div class="t" style="left:5px;top:6.1px;font-size:26.5px;line-height:26.5px;color:#1a1a1a">41</div></div>
<div style="position:absolute;left:2439px;top:1413px;width:44px;height:35px;overflow:hidden"><div class="t" style="left:5px;top:6.1px;font-size:26.5px;line-height:26.5px;color:#1a1a1a">8…</div></div>
<div style="position:absolute;left:2485px;top:1413px;width:45px;height:35px;overflow:hidden"><div class="t" style="left:5px;top:6.1px;font-size:26.5px;line-height:26.5px;color:#1a1a1a">O…</div></div>
<div class="r" style="left:1427px;top:1448px;width:1104px;height:2px;background:#d2d2d2;"></div>
<div class="r" style="left:1427px;top:1451px;width:1104px;height:10px;background:#f4f4f4;"></div>
<div style="position:absolute;left:1428px;top:1451px;width:202px;height:35px;overflow:hidden"><div class="t" style="left:5px;top:6.1px;font-size:26.5px;line-height:26.5px;color:#1a1a1a">8.00-10.00 sec</div></div>
<div style="position:absolute;left:1632px;top:1451px;width:144px;height:35px;overflow:hidden"><div class="t" style="left:5px;top:6.1px;font-size:26.5px;line-height:26.5px;color:#1a1a1a">170.00 MB</div></div>
<div style="position:absolute;left:1778px;top:1451px;width:166px;height:35px;overflow:hidden"><div class="t" style="left:5px;top:6.1px;font-size:26.5px;line-height:26.5px;color:#1a1a1a">730.00 Mbps</div></div>
<div style="position:absolute;left:1946px;top:1451px;width:118px;height:35px;overflow:hidden"><div class="t" style="left:5px;top:6.1px;font-size:26.5px;line-height:26.5px;color:#1a1a1a">WiFi</div></div>
<div style="position:absolute;left:2066px;top:1451px;width:101px;height:35px;overflow:hidden"><div class="t" style="left:5px;top:6.1px;font-size:26.5px;line-height:26.5px;color:#1a1a1a">ASU…</div></div>
<div style="position:absolute;left:2169px;top:1451px;width:84px;height:35px;overflow:hidden"><div class="t" style="left:5px;top:6.1px;font-size:26.5px;line-height:26.5px;color:#1a1a1a">10:…</div></div>
<div style="position:absolute;left:2255px;top:1451px;width:44px;height:35px;overflow:hidden"><div class="t" style="left:5px;top:6.1px;font-size:26.5px;line-height:26.5px;color:#1a1a1a">-…</div></div>
<div style="position:absolute;left:2301px;top:1451px;width:44px;height:35px;overflow:hidden"><div class="t" style="left:5px;top:6.1px;font-size:26.5px;line-height:26.5px;color:#1a1a1a">-…</div></div>
<div style="position:absolute;left:2347px;top:1451px;width:44px;height:35px;overflow:hidden"><div class="t" style="left:5px;top:6.1px;font-size:26.5px;line-height:26.5px;color:#1a1a1a">2…</div></div>
<div style="position:absolute;left:2393px;top:1451px;width:44px;height:35px;overflow:hidden"><div class="t" style="left:5px;top:6.1px;font-size:26.5px;line-height:26.5px;color:#1a1a1a">42</div></div>
<div style="position:absolute;left:2439px;top:1451px;width:44px;height:35px;overflow:hidden"><div class="t" style="left:5px;top:6.1px;font-size:26.5px;line-height:26.5px;color:#1a1a1a">8…</div></div>
<div style="position:absolute;left:2485px;top:1451px;width:45px;height:35px;overflow:hidden"><div class="t" style="left:5px;top:6.1px;font-size:26.5px;line-height:26.5px;color:#1a1a1a">O…</div></div>
<div class="r" style="left:1630px;top:501px;width:2px;height:960px;background:#d2d2d2;"></div>
<div class="r" style="left:1776px;top:501px;width:2px;height:960px;background:#d2d2d2;"></div>
<div class="r" style="left:1944px;top:501px;width:2px;height:960px;background:#d2d2d2;"></div>
<div class="r" style="left:2064px;top:501px;width:2px;height:960px;background:#d2d2d2;"></div>
<div class="r" style="left:2167px;top:501px;width:2px;height:960px;background:#d2d2d2;"></div>
<div class="r" style="left:2253px;top:501px;width:2px;height:960px;background:#d2d2d2;"></div>
<div class="r" style="left:2299px;top:501px;width:2px;height:960px;background:#d2d2d2;"></div>
<div class="r" style="left:2345px;top:501px;width:2px;height:960px;background:#d2d2d2;"></div>
<div class="r" style="left:2391px;top:501px;width:2px;height:960px;background:#d2d2d2;"></div>
<div class="r" style="left:2437px;top:501px;width:2px;height:960px;background:#d2d2d2;"></div>
<div class="r" style="left:2483px;top:501px;width:2px;height:960px;background:#d2d2d2;"></div>
</div>
<div class="r" style="left:0px;top:1504px;width:78px;height:96px;background:linear-gradient(200deg,#464c5d 0%,#67708a 55%,#7884a0 100%);"></div>
<div class="r" style="left:2481px;top:1504px;width:79px;height:96px;background:linear-gradient(#6a6a6c,#9c9c9e);"></div>
<div class="r" style="left:78px;top:1478px;width:108px;height:122px;background:linear-gradient(#b3b7c8,#a3a9c0 30%,#a0a7bf);border-radius:11px 11px 0 0;"></div>
<div class="r" style="left:186px;top:1504px;width:2px;height:96px;background:#5c6275;"></div>
<div class="r" style="left:188px;top:1477px;width:2293px;height:123px;background:linear-gradient(90deg,#a8aec3 0%,#b0b4c4 30%,#bfc0c6 55%,#c4c4c8 80%,#c7c7ca 100%);border-radius:11px 11px 0 0;"></div>
<div class="r" style="left:188px;top:1477px;width:2293px;height:26px;background:linear-gradient(rgba(255,255,255,.10),rgba(255,255,255,0));border-radius:11px 11px 0 0;"></div>
<svg style="left:0;top:1470px" width="2560" height="130" viewBox="0 1470 2560 130">
<defs>
<linearGradient id="finL" x1="0" y1="0" x2="0" y2="1"><stop offset="0" stop-color="#23c6f9"/><stop offset="1" stop-color="#1b6df0"/></linearGradient>
<linearGradient id="finR" x1="0" y1="0" x2="0" y2="1"><stop offset="0" stop-color="#f5f7fa"/><stop offset="1" stop-color="#dde5ef"/></linearGradient>
<linearGradient id="lp" x1="0" y1="0" x2="0" y2="1"><stop offset="0" stop-color="#d9dde0"/><stop offset="1" stop-color="#7a7e82"/></linearGradient>
<linearGradient id="saf" x1="0" y1="0" x2="0" y2="1"><stop offset="0" stop-color="#1fc6fa"/><stop offset="1" stop-color="#1a5ee8"/></linearGradient>
<linearGradient id="stamp" x1="0" y1="0" x2="0" y2="1"><stop offset="0" stop-color="#2a7de0"/><stop offset="1" stop-color="#a9d2f2"/></linearGradient>
<linearGradient id="ibk" x1="0" y1="0" x2="0" y2="1"><stop offset="0" stop-color="#fdb43a"/><stop offset="1" stop-color="#e9541d"/></linearGradient>
<linearGradient id="aps" x1="0" y1="0" x2="0" y2="1"><stop offset="0" stop-color="#1fc0fa"/><stop offset="1" stop-color="#1b69ea"/></linearGradient>
<linearGradient id="sys" x1="0" y1="0" x2="0" y2="1"><stop offset="0" stop-color="#d3dce4"/><stop offset="1" stop-color="#80868c"/></linearGradient>
<linearGradient id="ft" x1="0" y1="0" x2="0" y2="1"><stop offset="0" stop-color="#5fe46a"/><stop offset="1" stop-color="#1dbf3a"/></linearGradient>
<linearGradient id="msg" x1="0" y1="0" x2="0" y2="1"><stop offset="0" stop-color="#60d2fb"/><stop offset="1" stop-color="#1a7ff2"/></linearGradient>
<linearGradient id="itr" x1="0" y1="0" x2="1" y2="1"><stop offset="0" stop-color="#fb5a6e"/><stop offset=".5" stop-color="#c45ce8"/><stop offset="1" stop-color="#4cc4f6"/></linearGradient>
<linearGradient id="wifi" x1="0" y1="0" x2="0" y2="1"><stop offset="0" stop-color="#1f7ee0"/><stop offset="1" stop-color="#0c3f9a"/></linearGradient>
<linearGradient id="kg1" x1="0" y1="0" x2="1" y2="1"><stop offset="0" stop-color="#4ea0d8"/><stop offset="1" stop-color="#3b6fa8"/></linearGradient>
<linearGradient id="kg2" x1="0" y1="0" x2="0" y2="1"><stop offset="0" stop-color="#e8a23a"/><stop offset="1" stop-color="#c94431"/></linearGradient>
</defs>
<g transform="translate(-398 0)"><g transform="rotate(-9 530 1535)"><rect x="501" y="1498" width="58" height="74" fill="#fff" stroke="#fff" stroke-dasharray="2.6 2.2" stroke-width="3"/><rect x="506" y="1503" width="48" height="64" fill="url(#stamp)"/></g><path d="M509 1507L523 1520 534 1535 527 1541 516 1526z" fill="#dcd8cf"/><path d="M512 1515L521 1529 528 1539" fill="none" stroke="#3f3226" stroke-width="1.5"/><path d="M528 1535L545 1542 562 1553 542 1551 525 1544z" fill="#cfc8ba"/><path d="M530 1545L544 1550 558 1553" fill="none" stroke="#3f3226" stroke-width="1.5"/><path d="M515 1542L523 1537 528 1546 523 1552 516 1550z" fill="#b98e55"/><path d="M523 1533L530 1534 533 1541 527 1545z" fill="#a47b47"/><circle cx="556" cy="1557" r="18.5" fill="none" stroke="rgba(95,105,135,.55)" stroke-width="2.6"/><circle cx="556" cy="1557" r="10" fill="rgba(120,140,180,.25)" stroke="rgba(95,105,135,.45)" stroke-width="2"/><path d="M556 1552c-3-1-6 1-6 5s2 6 4 6c1 0 2-1 2-1s1 1 2 1c2 0 4-3 4-6s-3-6-6-5z" fill="rgba(60,90,150,.7)"/></g>
<circle cx="165" cy="1507" r="17" fill="#e2e2e4" stroke="#b9bcc4" stroke-width="1"/><rect x="155" y="1498" width="21" height="16" fill="#e8e8e8" stroke="#000" stroke-width="2.2"/><rect x="161" y="1516" width="9" height="2" fill="#000"/>
<rect x="204" y="1500" width="73" height="69" rx="3" fill="url(#finR)"/><path d="M207 1500H242c-4 10-8 22-8 36h9c-1 10 0 22 2 33H207a3 3 0 0 1-3-3V1503a3 3 0 0 1 3-3z" fill="url(#finL)"/><path d="M219 1544c12 10 36 10 46 -2" fill="none" stroke="#111" stroke-width="2.5"/><rect x="224" y="1518" width="3" height="8" rx="1.5" fill="#111"/><rect x="257" y="1518" width="3" height="8" rx="1.5" fill="#111"/>
<circle cx="339" cy="1534.5" r="39" fill="url(#lp)" stroke="#e8eaec" stroke-width="2"/><path d="M361.7 1511.6C350 1514 340 1520 331 1531L311 1538C318 1540 322 1542 326 1545L316 1557C322 1556 328 1553 331 1550L335 1562C338 1555 342 1548 343 1542C353 1534 359 1524 361.7 1511.6Z" fill="#45474a"/><circle cx="347" cy="1527" r="5.5" fill="#a9adb0"/>
<circle cx="437" cy="1534" r="39" fill="#f2f2f4"/><circle cx="437" cy="1534" r="35" fill="url(#saf)"/><circle cx="437" cy="1534" r="31" fill="none" stroke="rgba(255,255,255,.6)" stroke-width="5" stroke-dasharray="1.2 2.7"/><path d="M461 1510L441 1538 433 1530z" fill="#f33a3a"/><path d="M413 1558L433 1530 441 1538z" fill="#f4f4f4"/>
<g transform="translate(0 0)"><g transform="rotate(-9 530 1535)"><rect x="501" y="1498" width="58" height="74" fill="#fff" stroke="#fff" stroke-dasharray="2.6 2.2" stroke-width="3"/><rect x="506" y="1503" width="48" height="64" fill="url(#stamp)"/></g><path d="M509 1507L523 1520 534 1535 527 1541 516 1526z" fill="#dcd8cf"/><path d="M512 1515L521 1529 528 1539" fill="none" stroke="#3f3226" stroke-width="1.5"/><path d="M528 1535L545 1542 562 1553 542 1551 525 1544z" fill="#cfc8ba"/><path d="M530 1545L544 1550 558 1553" fill="none" stroke="#3f3226" stroke-width="1.5"/><path d="M515 1542L523 1537 528 1546 523 1552 516 1550z" fill="#b98e55"/><path d="M523 1533L530 1534 533 1541 527 1545z" fill="#a47b47"/><circle cx="556" cy="1557" r="18.5" fill="none" stroke="rgba(95,105,135,.55)" stroke-width="2.6"/><circle cx="556" cy="1557" r="10" fill="rgba(120,140,180,.25)" stroke="rgba(95,105,135,.45)" stroke-width="2"/><path d="M556 1552c-3-1-6 1-6 5s2 6 4 6c1 0 2-1 2-1s1 1 2 1c2 0 4-3 4-6s-3-6-6-5z" fill="rgba(60,90,150,.7)"/></g>
<g transform="rotate(-7 631 1535)"><rect x="597" y="1495" width="66" height="80" rx="5" fill="#b9874c"/><rect x="661" y="1505" width="6" height="14" fill="#e7e7e7"/><rect x="661" y="1519" width="6" height="14" fill="#59c8f0"/><rect x="661" y="1533" width="6" height="14" fill="#64cf5a"/><rect x="661" y="1547" width="6" height="14" fill="#f2b12e"/><circle cx="630" cy="1528" r="19" fill="none" stroke="#a9783f" stroke-width="2"/><circle cx="630" cy="1523" r="7" fill="#a9783f"/><path d="M616 1545c2-10 8-13 14-13s12 3 14 13z" fill="#a9783f"/></g>
<g transform="rotate(-5 727 1534)"><rect x="690" y="1504" width="72" height="67" fill="#6b7880"/><rect x="694" y="1497" width="64" height="68" fill="#f6f6f6"/><rect x="694" y="1497" width="64" height="17" fill="#e9575a"/><text x="726" y="1511.5" font-family="Liberation Sans, sans-serif" font-size="13" fill="#fff" text-anchor="middle">JUL</text><text x="726" y="1557" font-family="Liberation Sans, sans-serif" font-size="40" fill="#222" text-anchor="middle" letter-spacing="-1">20</text></g>
<g transform="rotate(-4 825 1534)"><rect x="792" y="1496" width="68" height="78" fill="#fdfdfb" stroke="#c9b06a" stroke-width="1"/><rect x="792" y="1496" width="68" height="12" fill="#fad23c"/><path d="M795 1514H857" stroke="#dadada" stroke-width="0.8"/><path d="M795 1520H857" stroke="#dadada" stroke-width="0.8"/><path d="M795 1526H857" stroke="#dadada" stroke-width="0.8"/><path d="M795 1532H857" stroke="#dadada" stroke-width="0.8"/><path d="M795 1538H857" stroke="#dadada" stroke-width="0.8"/><path d="M795 1544H857" stroke="#dadada" stroke-width="0.8"/><path d="M795 1550H857" stroke="#dadada" stroke-width="0.8"/><path d="M795 1556H857" stroke="#dadada" stroke-width="0.8"/><path d="M795 1562H857" stroke="#dadada" stroke-width="0.8"/><path d="M795 1568H857" stroke="#dadada" stroke-width="0.8"/></g>
<g transform="rotate(-5 922 1535)"><rect x="892" y="1499" width="64" height="74" rx="4" fill="#2b2b2b"/><rect x="891" y="1497" width="64" height="72" rx="4" fill="#f7f7f7"/><circle cx="904" cy="1515" r="4.5" fill="#fb8a2a"/><circle cx="904" cy="1529" r="4.5" fill="#23a8f2"/><circle cx="904" cy="1543" r="4.5" fill="#50cf3b"/><circle cx="904" cy="1557" r="4.5" fill="#c76ae4"/><path d="M913 1505H945M913 1519H945M913 1533H945M913 1547H945M913 1561H945" stroke="#dcdcdc" stroke-width="1"/></g><circle cx="953" cy="1506" r="17" fill="#f3423f"/><text x="953" y="1515" font-family="Liberation Sans, sans-serif" font-size="23" fill="#fff" text-anchor="middle">3</text>
<g transform="rotate(-5 1016 1534)"><rect x="981" y="1500" width="68" height="70" fill="#fbfaf6" stroke="#ddd" stroke-width="1"/><rect x="985" y="1504" width="60" height="62" fill="#e9e3d3"/><rect x="985" y="1504" width="38" height="7" fill="#7cc35f"/><rect x="1030" y="1505" width="10" height="6" fill="#f2c6d0"/><path d="M985 1521H1028V1566" fill="none" stroke="#3aa0ea" stroke-width="5"/><path d="M985 1544c16-2 28 6 40 20" fill="none" stroke="#f4d04a" stroke-width="6"/><path d="M996 1531h20v9c0 6-10 9-10 9s-10-3-10-9z" fill="#2f6fcf" stroke="#fff" stroke-width="1"/><rect x="996" y="1529" width="20" height="3" fill="#e84040"/></g><circle cx="1041" cy="1550" r="19" fill="#f5f5f5" stroke="#c8c8c8" stroke-width="1"/><circle cx="1041" cy="1550" r="11.5" fill="none" stroke="#3f6f86" stroke-width="1.2"/><path d="M1038 1534h6l-3 -4z" fill="#e02020"/><text x="1041" y="1555" font-family="Liberation Sans, sans-serif" font-size="12" fill="#333" text-anchor="middle">3D</text>
<circle cx="1117" cy="1534" r="39" fill="#f5f5f5" stroke="#d8d8d8" stroke-width="1"/><ellipse cx="1117" cy="1517.5" rx="9.5" ry="16" fill="#f6a43c" opacity=".88" transform="rotate(0 1117 1534)"/><ellipse cx="1117" cy="1517.5" rx="9.5" ry="16" fill="#f5d63d" opacity=".88" transform="rotate(45 1117 1534)"/><ellipse cx="1117" cy="1517.5" rx="9.5" ry="16" fill="#b5d44c" opacity=".88" transform="rotate(90 1117 1534)"/><ellipse cx="1117" cy="1517.5" rx="9.5" ry="16" fill="#5dbb6d" opacity=".88" transform="rotate(135 1117 1534)"/><ellipse cx="1117" cy="1517.5" rx="9.5" ry="16" fill="#5aa7db" opacity=".88" transform="rotate(180 1117 1534)"/><ellipse cx="1117" cy="1517.5" rx="9.5" ry="16" fill="#8a7fcf" opacity=".88" transform="rotate(225 1117 1534)"/><ellipse cx="1117" cy="1517.5" rx="9.5" ry="16" fill="#d07ab8" opacity=".88" transform="rotate(270 1117 1534)"/><ellipse cx="1117" cy="1517.5" rx="9.5" ry="16" fill="#ea5b50" opacity=".88" transform="rotate(315 1117 1534)"/><circle cx="1117" cy="1534" r="1.6" fill="#fff"/>
<ellipse cx="1210" cy="1527" rx="34" ry="28" fill="url(#msg)"/><path d="M1186 1545l-8 16 20-10z" fill="#2a8ef3"/><ellipse cx="1230" cy="1548" rx="24" ry="19" fill="#eef3f8"/><path d="M1246 1560l8 8-16-4z" fill="#eef3f8"/><circle cx="1219" cy="1549" r="3.6" fill="#1f64c4"/><circle cx="1230" cy="1549" r="3.6" fill="#1f64c4"/><circle cx="1241" cy="1549" r="3.6" fill="#1f64c4"/>
<rect x="1272" y="1500" width="70" height="68" rx="8" fill="url(#ft)"/><rect x="1284" y="1516" width="36" height="27" rx="4" fill="#f2f2f2"/><path d="M1320 1526l12-8v24l-12-8z" fill="#f2f2f2"/><circle cx="1331" cy="1552" r="19" fill="#eef4ee" stroke="#cfd8cf" stroke-width="1"/><path d="M1324 1544c0 8 6 14 14 15l3-4-4-3-2 2c-3-1-5-4-6-6l2-2-3-4z" fill="#27c13e"/>
<circle cx="1409" cy="1534" r="40" fill="url(#itr)"/><circle cx="1409" cy="1534" r="35" fill="#f2f3f6"/><path d="M1398 1548V1513l21-5v34" fill="none" stroke="#e4456e" stroke-width="6"/><circle cx="1393" cy="1549" r="7" fill="#a765e6"/><circle cx="1414" cy="1543" r="7" fill="#4a9cf0"/>
<circle cx="1507" cy="1534" r="39" fill="#f4f4f4"/><circle cx="1507" cy="1534" r="36" fill="url(#ibk)"/><path d="M1507 1520c-8-6-18-6-24-4v34c6-2 16-2 24 4z" fill="#fff"/><path d="M1507 1520c8-6 18-6 24-4v34c-6-2-16-2-24 4z" fill="#fff"/>
<circle cx="1603" cy="1534" r="39" fill="#f4f4f4"/><circle cx="1603" cy="1534" r="36" fill="url(#aps)"/><path d="M1602 1510L1583 1555M1604 1510L1623 1555M1580 1536H1627" stroke="#fff" stroke-width="5" stroke-linecap="round"/>
<rect x="1662" y="1498" width="78" height="74" rx="4" fill="url(#sys)" stroke="#6d7277" stroke-width="1"/><circle cx="1701" cy="1535" r="32" fill="#2f3133"/><circle cx="1701" cy="1535" r="28.5" fill="none" stroke="#a9abad" stroke-width="5.5" stroke-dasharray="3.6 2.9"/><circle cx="1701" cy="1535" r="24.5" fill="#9c9ea1"/><circle cx="1701" cy="1535" r="20.5" fill="#3e4043"/><path d="M1701 1535V1514M1701 1535L1683 1546M1701 1535L1719 1546" stroke="#a7a9ab" stroke-width="4.5"/><circle cx="1701" cy="1535" r="3" fill="#8d8f91"/>
<g transform="rotate(-6 1797 1534)"><rect x="1766" y="1497" width="62" height="78" fill="#fcfcfc" stroke="#ddd" stroke-width="1"/><rect x="1766" y="1497" width="62" height="14" fill="#f39a2c"/><text x="1770" y="1509" font-family="Liberation Sans, sans-serif" font-size="10" fill="#fff">PAGES</text><rect x="1772" y="1516" width="24" height="18" fill="#3a8fd8"/><path d="M1772 1540H1822" stroke="#bbb" stroke-width="1"/><path d="M1772 1545H1822" stroke="#bbb" stroke-width="1"/><path d="M1772 1550H1822" stroke="#bbb" stroke-width="1"/><path d="M1772 1555H1822" stroke="#bbb" stroke-width="1"/><path d="M1772 1560H1822" stroke="#bbb" stroke-width="1"/><path d="M1772 1565H1822" stroke="#bbb" stroke-width="1"/></g><path d="M1828 1496L1808 1568" stroke="#f4a425" stroke-width="6" stroke-linecap="round"/><path d="M1810 1560L1806 1574" stroke="#333" stroke-width="4"/>
<path d="M1857 1545h78v27h-78z" fill="#f0f0f0" stroke="#ddd" stroke-width="1"/><rect x="1869" y="1534" width="13" height="30" fill="#e8394b"/><rect x="1885" y="1520" width="13" height="44" fill="#f48a2a"/><rect x="1901" y="1499" width="13" height="65" fill="#27c24a"/><rect x="1917" y="1512" width="13" height="52" fill="#2b9df0"/>
<rect x="1952" y="1495" width="81" height="69" rx="11" fill="#5aaeea"/><path d="M1982 1563l10 12 10-12z" fill="#5aaeea"/><path d="M2021 1515c-3 1-5 2-8 2 3-2 5-4 6-7-3 2-6 3-9 3-6-6-17-2-17 7v2c-9 0-17-4-23-11-3 6-1 13 4 16-2 0-4 0-5-1 0 6 4 11 10 12-2 1-4 1-6 0 2 5 6 8 12 8-6 4-13 6-20 5 22 13 48 0 48-26z" fill="#050505"/>
<g transform="rotate(6 2085 1520)"><rect x="2064" y="1498" width="62" height="48" fill="#fff"/><rect x="2067" y="1501" width="56" height="42" fill="#b49c74"/></g><g transform="rotate(-10 2080 1545)"><rect x="2052" y="1517" width="62" height="54" fill="#fff" stroke="#ddd" stroke-width="1"/><rect x="2056" y="1521" width="54" height="46" fill="#7fb0e8"/><rect x="2056" y="1543" width="54" height="24" fill="#2f5f8f"/></g><circle cx="2118" cy="1555" r="16" fill="#8a7d6a" stroke="#5d5447" stroke-width="3"/><circle cx="2118" cy="1553" r="10" fill="#cfd4d8"/>
<defs><clipPath id="wc"><circle cx="2187" cy="1534.7" r="44"/></clipPath></defs><circle cx="2187" cy="1534.7" r="45" fill="#1d86ea"/><g clip-path="url(#wc)"><path d="M2120 1480L2260 1620H2120z" fill="#0d4f9f" opacity=".85"/><path d="M2140 1530c15-6 30-8 45-14s28-2 50 2M2140 1545c15-8 35-10 50-14s25 0 45 4M2145 1558c20-10 35-14 50-16s20 2 40 6" fill="none" stroke="#5db3f5" stroke-width="1.6" opacity=".8"/></g><circle cx="2187" cy="1534.7" r="44.2" fill="none" stroke="#2d8ff0" stroke-width="1.5"/><path d="M2165 1539.5Q2187 1523 2209 1539.5" fill="none" stroke="#0a1838" stroke-width="8"/><path d="M2173 1551Q2187 1541 2201 1551" fill="none" stroke="#0a1838" stroke-width="6"/><path d="M2181.5 1559h10.5l-5.2 5.5z" fill="#0a1838"/><rect x="2159.5" y="1506" width="8.5" height="17" rx="1.2" fill="none" stroke="#0b2e66" stroke-width="1.8"/><rect x="2207" y="1506" width="8.5" height="17" rx="1.2" fill="none" stroke="#0b2e66" stroke-width="1.8"/>
<path d="M2258.6 1494V1583" stroke="#6f6f74" stroke-width="1.5"/>
<rect x="2291" y="1516" width="75" height="45" fill="#fff"/><rect x="2294" y="1519" width="69" height="38" fill="#3d3a34"/><rect x="2294" y="1540" width="69" height="17" fill="#2e2b27"/><circle cx="2298" cy="1526" r="3" fill="#8a8a86"/><circle cx="2306" cy="1530" r="3" fill="#8a8a86"/><circle cx="2314" cy="1526" r="3" fill="#8a8a86"/><circle cx="2322" cy="1530" r="3" fill="#8a8a86"/><circle cx="2330" cy="1526" r="3" fill="#8a8a86"/><circle cx="2338" cy="1530" r="3" fill="#8a8a86"/><circle cx="2346" cy="1526" r="3" fill="#8a8a86"/><circle cx="2354" cy="1530" r="3" fill="#8a8a86"/><circle cx="2362" cy="1526" r="3" fill="#8a8a86"/><circle cx="2316" cy="1547" r="5" fill="#b9b9b6"/>
<path d="M2395 1504h64l-8 66c-1 4-3 5-6 5h-36c-3 0-5-1-6-5z" fill="#e9eaec" stroke="#d4d6da" stroke-width="1"/><ellipse cx="2427" cy="1504" rx="32" ry="8" fill="#f2f3f5" stroke="#d9dbde" stroke-width="1"/>
<defs><radialGradient id="kgb" cx=".45" cy=".6" r=".6"><stop offset="0" stop-color="#7fd6ec"/><stop offset=".6" stop-color="#3b8cc4"/><stop offset="1" stop-color="#4a5aa8"/></radialGradient><radialGradient id="kgg" cx=".5" cy=".6" r=".6"><stop offset="0" stop-color="#a6e39a"/><stop offset=".6" stop-color="#52b862"/><stop offset="1" stop-color="#3c9a52"/></radialGradient><radialGradient id="kgr" cx=".4" cy=".4" r=".7"><stop offset="0" stop-color="#f4d25e"/><stop offset=".5" stop-color="#e5873a"/><stop offset="1" stop-color="#c9444a"/></radialGradient></defs><radialGradient id="kgs" cx=".5" cy=".5" r=".6"><stop offset="0" stop-color="#d6d6d8"/><stop offset="1" stop-color="#8a8a8c"/></radialGradient><circle cx="2500" cy="1550" r="36" fill="url(#kgs)"/><ellipse cx="2494" cy="1519" rx="42" ry="34" fill="url(#kgb)" opacity=".85"/><ellipse cx="2470" cy="1574" rx="36" ry="26" fill="url(#kgg)" opacity=".85"/><ellipse cx="2531" cy="1557" rx="28" ry="41" fill="url(#kgr)" opacity=".88"/><text x="2536" y="1550" font-family="Liberation Sans, sans-serif" font-size="22" font-weight="bold" fill="#f0d98c" stroke="#8a6a30" stroke-width=".6" text-anchor="middle" transform="scale(1 1.2) translate(0 -258)">KG</text>
<circle cx="240" cy="1592" r="4" fill="#222a3c"/>
<circle cx="436" cy="1592" r="4" fill="#222a3c"/>
<circle cx="531.6" cy="1592" r="4" fill="#222a3c"/>
<circle cx="823" cy="1592" r="4" fill="#222a3c"/>
<circle cx="921.6" cy="1592" r="4" fill="#222a3c"/>
<circle cx="1213.7" cy="1592" r="4" fill="#222a3c"/>
<circle cx="1407.6" cy="1592" r="4" fill="#222a3c"/>
<circle cx="1601.5" cy="1592" r="4" fill="#222a3c"/>
<circle cx="1797.6" cy="1592" r="4" fill="#222a3c"/>
<circle cx="1992" cy="1592" r="4" fill="#222a3c"/>
<circle cx="2090" cy="1592" r="4" fill="#222a3c"/>
<circle cx="2185.8" cy="1592" r="4" fill="#222a3c"/>
</svg>
</body></html>
